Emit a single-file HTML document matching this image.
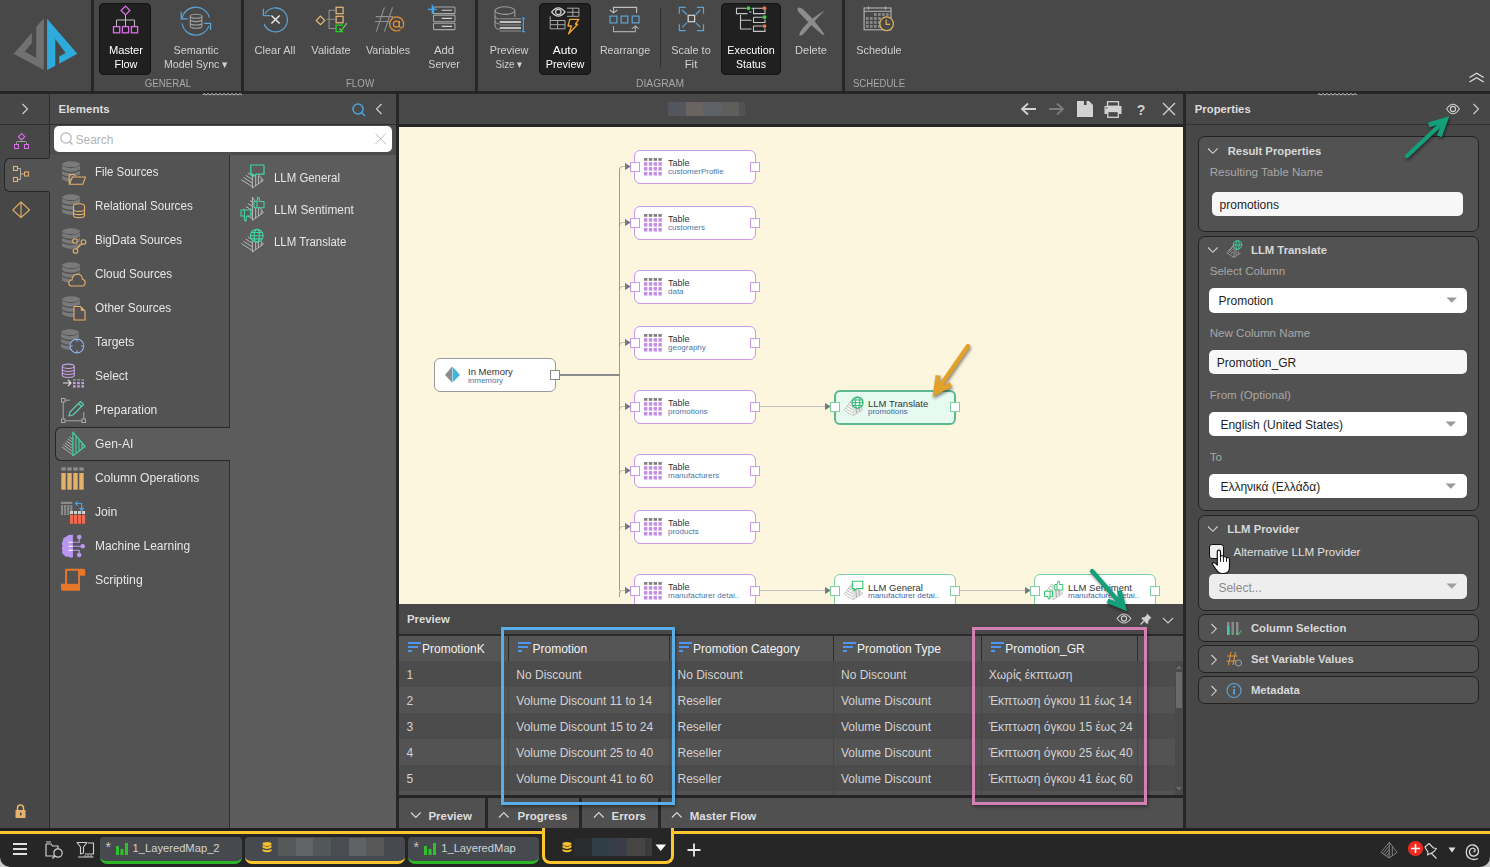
<!DOCTYPE html>
<html><head><meta charset="utf-8"><style>
html,body{margin:0;padding:0;width:1490px;height:867px;overflow:hidden;background:#262626;}
body{position:relative;font-family:"Liberation Sans",sans-serif;}
.t{position:absolute;line-height:1;white-space:nowrap;}
svg{overflow:visible}
</style></head><body>
<div style="position:absolute;left:0px;top:0px;width:1490px;height:91px;background:#484848;"></div>
<div style="position:absolute;left:0px;top:91px;width:1490px;height:3px;background:#262626;"></div>
<div style="position:absolute;left:91px;top:0px;width:3px;height:91px;background:#262626;"></div>
<div style="position:absolute;left:241px;top:0px;width:3px;height:91px;background:#262626;"></div>
<div style="position:absolute;left:475px;top:0px;width:3px;height:91px;background:#262626;"></div>
<div style="position:absolute;left:842px;top:0px;width:3px;height:91px;background:#262626;"></div>
<div style="position:absolute;left:0px;top:94px;width:49px;height:734px;background:#474747;"></div>
<div style="position:absolute;left:49px;top:94px;width:1px;height:734px;background:#2a2a2a;"></div>
<div style="position:absolute;left:0px;top:124px;width:49px;height:1px;background:#2e2e2e;"></div>
<div style="position:absolute;left:50px;top:94px;width:346px;height:30px;background:#4a4a4a;"></div>
<div style="position:absolute;left:50px;top:124px;width:346px;height:1px;background:#2e2e2e;"></div>
<div style="position:absolute;left:50px;top:125px;width:346px;height:30px;background:#4d4d4d;"></div>
<div style="position:absolute;left:50px;top:155px;width:179px;height:673px;background:#535353;"></div>
<div style="position:absolute;left:229px;top:155px;width:1px;height:673px;background:#2f2f2f;"></div>
<div style="position:absolute;left:230px;top:155px;width:166px;height:673px;background:#5c5c5c;"></div>
<div style="position:absolute;left:396px;top:94px;width:3px;height:734px;background:#262626;"></div>
<div style="position:absolute;left:399px;top:94px;width:784px;height:30px;background:#484848;"></div>
<div style="position:absolute;left:399px;top:124px;width:784px;height:3px;background:#262626;"></div>
<div style="position:absolute;left:399px;top:127px;width:784px;height:477px;background:#fdf6df;"></div>
<div style="position:absolute;left:1183px;top:94px;width:3px;height:734px;background:#262626;"></div>
<div style="position:absolute;left:1186px;top:94px;width:304px;height:734px;background:#474747;"></div>
<div style="position:absolute;left:1186px;top:124px;width:304px;height:1px;background:#333333;"></div>
<div style="position:absolute;left:0px;top:828px;width:1490px;height:39px;background:#262626;"></div>
<div style="position:absolute;left:0px;top:831px;width:1490px;height:3px;background:#fdc52e;"></div>
<svg style="position:absolute;left:0px;top:0px;" width="91" height="91" viewBox="0 0 91 91">
<polygon points="43.8,18.6 36.2,26.8 36.2,58.1 24.7,51.5 31.8,43.3 31.8,32.9 13.7,53.7 43.8,70.1" fill="#707173"/>
<polygon points="47.1,18.8 77.3,53.7 59.2,63.8 59.2,56.4 65.7,53.1 55.3,38.9 55.3,65.7 47.1,70.1" fill="#2eaadc"/>
</svg>
<div style="position:absolute;left:99px;top:3px;width:52px;height:72px;background:#202020;border-radius:5px;box-shadow:0 0 0 1px #151515 inset;"></div>
<div style="position:absolute;left:539px;top:3px;width:52px;height:72px;background:#202020;border-radius:5px;box-shadow:0 0 0 1px #151515 inset;"></div>
<div style="position:absolute;left:721px;top:3px;width:60px;height:72px;background:#202020;border-radius:5px;box-shadow:0 0 0 1px #151515 inset;"></div>
<div class="t" style="left:-174.5px;width:600px;text-align:center;top:45.29px;font-size:11px;color:#ffffff;font-weight:normal;transform:scaleX(1.0143);transform-origin:center top;">Master</div>
<div class="t" style="left:-174.5px;width:600px;text-align:center;top:59.29px;font-size:11px;color:#ffffff;font-weight:normal;transform:scaleX(0.9903);transform-origin:center top;">Flow</div>
<div class="t" style="left:-104.19999999999999px;width:600px;text-align:center;top:45.29px;font-size:11px;color:#d0d0d0;font-weight:normal;transform:scaleX(0.9835);transform-origin:center top;">Semantic</div>
<div class="t" style="left:-104.19999999999999px;width:600px;text-align:center;top:59.29px;font-size:11px;color:#d0d0d0;font-weight:normal;transform:scaleX(0.9640);transform-origin:center top;">Model Sync &#9662;</div>
<div class="t" style="left:-25px;width:600px;text-align:center;top:45.29px;font-size:11px;color:#d0d0d0;font-weight:normal;transform:scaleX(0.9985);transform-origin:center top;">Clear All</div>
<div class="t" style="left:31px;width:600px;text-align:center;top:45.29px;font-size:11px;color:#d0d0d0;font-weight:normal;transform:scaleX(1.0119);transform-origin:center top;">Validate</div>
<div class="t" style="left:87.69999999999999px;width:600px;text-align:center;top:45.29px;font-size:11px;color:#d0d0d0;font-weight:normal;transform:scaleX(0.9790);transform-origin:center top;">Variables</div>
<div class="t" style="left:144px;width:600px;text-align:center;top:45.29px;font-size:11px;color:#d0d0d0;font-weight:normal;transform:scaleX(1.0320);transform-origin:center top;">Add</div>
<div class="t" style="left:144px;width:600px;text-align:center;top:59.29px;font-size:11px;color:#d0d0d0;font-weight:normal;transform:scaleX(0.9722);transform-origin:center top;">Server</div>
<div class="t" style="left:209px;width:600px;text-align:center;top:45.29px;font-size:11px;color:#d0d0d0;font-weight:normal;transform:scaleX(0.9891);transform-origin:center top;">Preview</div>
<div class="t" style="left:209px;width:600px;text-align:center;top:59.29px;font-size:11px;color:#d0d0d0;font-weight:normal;transform:scaleX(0.8867);transform-origin:center top;">Size &#9662;</div>
<div class="t" style="left:265.1px;width:600px;text-align:center;top:45.29px;font-size:11px;color:#ffffff;font-weight:normal;transform:scaleX(1.0871);transform-origin:center top;">Auto</div>
<div class="t" style="left:265.1px;width:600px;text-align:center;top:59.29px;font-size:11px;color:#ffffff;font-weight:normal;transform:scaleX(0.9891);transform-origin:center top;">Preview</div>
<div class="t" style="left:324.5px;width:600px;text-align:center;top:45.29px;font-size:11px;color:#d0d0d0;font-weight:normal;transform:scaleX(0.9639);transform-origin:center top;">Rearrange</div>
<div class="t" style="left:391.1px;width:600px;text-align:center;top:45.29px;font-size:11px;color:#d0d0d0;font-weight:normal;transform:scaleX(0.9913);transform-origin:center top;">Scale to</div>
<div class="t" style="left:391.1px;width:600px;text-align:center;top:59.29px;font-size:11px;color:#d0d0d0;font-weight:normal;transform:scaleX(1.0393);transform-origin:center top;">Fit</div>
<div class="t" style="left:451.1px;width:600px;text-align:center;top:45.29px;font-size:11px;color:#ffffff;font-weight:normal;transform:scaleX(0.9791);transform-origin:center top;">Execution</div>
<div class="t" style="left:451.1px;width:600px;text-align:center;top:59.29px;font-size:11px;color:#ffffff;font-weight:normal;transform:scaleX(0.9556);transform-origin:center top;">Status</div>
<div class="t" style="left:511.20000000000005px;width:600px;text-align:center;top:45.29px;font-size:11px;color:#d0d0d0;font-weight:normal;transform:scaleX(1.0001);transform-origin:center top;">Delete</div>
<div class="t" style="left:579px;width:600px;text-align:center;top:45.29px;font-size:11px;color:#d0d0d0;font-weight:normal;transform:scaleX(0.9876);transform-origin:center top;">Schedule</div>
<div class="t" style="left:-132.3px;width:600px;text-align:center;top:78.19px;font-size:11px;color:#a8a8a8;font-weight:normal;transform:scaleX(0.8826);transform-origin:center top;">GENERAL</div>
<div class="t" style="left:59.60000000000002px;width:600px;text-align:center;top:78.19px;font-size:11px;color:#a8a8a8;font-weight:normal;transform:scaleX(0.8875);transform-origin:center top;">FLOW</div>
<div class="t" style="left:360.1px;width:600px;text-align:center;top:78.19px;font-size:11px;color:#a8a8a8;font-weight:normal;transform:scaleX(0.9369);transform-origin:center top;">DIAGRAM</div>
<div class="t" style="left:853px;top:78.19px;font-size:11px;color:#a8a8a8;font-weight:normal;transform:scaleX(0.8680);transform-origin:left top;">SCHEDULE</div>
<div style="position:absolute;left:660px;top:8px;width:1px;height:59px;background:#2e2e2e;"></div>
<svg style="position:absolute;left:1468px;top:71px;" width="18" height="14" viewBox="0 0 18 14"><path d="M1.5,6.5 L8.6,2.2 L15.8,6.5 M1.5,11 L8.6,6.7 L15.8,11" fill="none" stroke="#dcdcdc" stroke-width="1.3"/></svg>
<svg style="position:absolute;left:112px;top:5px;" width="30" height="32" viewBox="0 0 30 32">
<rect x="10.4" y="2.4" width="6.2" height="6.2" transform="rotate(45 13.5 5.5)" fill="none" stroke="#d96fe6" stroke-width="1.3"/>
<path d="M13.5,10 V15 M4.5,21 V15 H22.5 V21 M13.5,15 V21" fill="none" stroke="#bdbdbd" stroke-width="1"/>
<rect x="1.5" y="21.6" width="6.2" height="6.2" fill="none" stroke="#d96fe6" stroke-width="1.3"/>
<rect x="10.4" y="21.6" width="6.2" height="6.2" fill="none" stroke="#d96fe6" stroke-width="1.3"/>
<rect x="19.4" y="21.6" width="6.2" height="6.2" fill="none" stroke="#d96fe6" stroke-width="1.3"/>
</svg>
<svg style="position:absolute;left:179px;top:5px;" width="36" height="34" viewBox="0 0 36 34">
<path d="M3.0,13.7 A14,14 0 0 1 30.4,12.7" fill="none" stroke="#5ea3d4" stroke-width="1.2"/>
<path d="M2.2,6.8 V13.9 H8.8" fill="none" stroke="#5ea3d4" stroke-width="1.2"/>
<path d="M30.0,20.9 A14,14 0 0 1 3.0,18.5" fill="none" stroke="#5ea3d4" stroke-width="1.2"/>
<path d="M31.6,25 V18.3 H25.2" fill="none" stroke="#5ea3d4" stroke-width="1.2"/>
<ellipse cx="17.1" cy="11.2" rx="5.8" ry="2" fill="none" stroke="#a0a0a0" stroke-width="1.1"/>
<path d="M11.3,11.2 V21.3 A5.8,2 0 0 0 22.9,21.3 V11.2 M11.3,14.6 A5.8,2 0 0 0 22.9,14.6 M11.3,18 A5.8,2 0 0 0 22.9,18" fill="none" stroke="#a0a0a0" stroke-width="1.1"/>
</svg>
<svg style="position:absolute;left:261px;top:5px;" width="30" height="30" viewBox="0 0 30 30">
<path d="M3.12,19.0 A12,12 0 1 0 4.0,8.9" fill="none" stroke="#5ea3d4" stroke-width="1.2"/>
<path d="M2.4,3.8 V10.6 H9.2" fill="none" stroke="#5ea3d4" stroke-width="1.2"/>
<path d="M10.4,10.4 L18.6,18.6 M18.6,10.4 L10.4,18.6" stroke="#ececec" stroke-width="1.4"/>
</svg>
<svg style="position:absolute;left:315px;top:5px;" width="34" height="30" viewBox="0 0 34 30">
<rect x="2.5" y="12.4" width="6" height="6" transform="rotate(45 5.5 15.4)" fill="none" stroke="#e8b87a" stroke-width="1.2"/>
<path d="M20,5.2 H14.1 V23.5 H21 M14.1,14.3 H20 M11.5,14.3 H14.1" fill="none" stroke="#8f8f8f" stroke-width="1.1"/>
<rect x="21.1" y="2.3" width="7" height="6.4" fill="none" stroke="#e8b87a" stroke-width="1.2"/>
<rect x="21.1" y="11.3" width="7" height="6.5" fill="none" stroke="#e8b87a" stroke-width="1.2"/>
<path d="M28.1,20.2 H21.1 V26.7 H28.1" fill="none" stroke="#1ed41e" stroke-width="1.3"/>
<path d="M24.3,23.5 L26.4,25.6 L31.8,18.1" fill="none" stroke="#5fd35f" stroke-width="1.2"/>
</svg>
<svg style="position:absolute;left:373px;top:6px;" width="34" height="30" viewBox="0 0 34 30">
<path d="M11.4,1.3 L3.3,25.7 M19.5,1.3 L11.4,25.7 M2.8,10.6 H20 M2,15.5 H16.7" stroke="#8f8f8f" stroke-width="1.1"/>
<path d="M29.5,21.8 A7,7 0 1 0 27.5,23.8" fill="none" stroke="#e0913a" stroke-width="1.2"/>
<circle cx="23.4" cy="18.2" r="3" fill="none" stroke="#e0913a" stroke-width="1.2"/>
<path d="M26.4,15 V20 Q26.6,22.3 29.5,21.8" fill="none" stroke="#e0913a" stroke-width="1.2"/>
</svg>
<svg style="position:absolute;left:427px;top:4px;" width="34" height="30" viewBox="0 0 34 30">
<rect x="6.5" y="3" width="21.5" height="6.5" rx="0.8" fill="none" stroke="#a6a6a6" stroke-width="1.1"/>
<rect x="6.5" y="11.1" width="21.5" height="6.6" rx="0.8" fill="none" stroke="#a6a6a6" stroke-width="1.1"/>
<rect x="6.5" y="19.2" width="21.5" height="6.4" rx="0.8" fill="none" stroke="#a6a6a6" stroke-width="1.1"/>
<path d="M14.7,6.25 H25 M14.7,14.4 H25 M14.7,22.4 H25" stroke="#d0d0d0" stroke-width="1.2"/>
<path d="M5.3,0.8 V9.9 M0.9,5.4 H9.9" stroke="#3ba8ef" stroke-width="1.3"/>
</svg>
<svg style="position:absolute;left:493px;top:5px;" width="34" height="30" viewBox="0 0 34 30">
<ellipse cx="11.9" cy="5.6" rx="9.9" ry="3.8" fill="none" stroke="#9a9a9a" stroke-width="1.1"/>
<path d="M2,5.6 V21 Q2.5,23.8 6.5,24.5" fill="none" stroke="#9a9a9a" stroke-width="1.1"/>
<path d="M21.8,5.6 V12" fill="none" stroke="#9a9a9a" stroke-width="1.1"/>
<path d="M2,11 Q2.5,13.5 6.5,14 M2,16 Q2.5,18.5 6.5,19" fill="none" stroke="#9a9a9a" stroke-width="1.1"/>
<path d="M6.7,13.7 H27.9 M6.7,20 H27.9 M6.7,26 H27.9" stroke="#7a7a7a" stroke-width="1.4"/>
<path d="M6.7,17 H27.9 M6.7,23 H27.9" stroke="#c0c0c0" stroke-width="2"/>
<path d="M30.3,13.1 V26.6 M28.9,13.1 H31.8 M28.9,26.6 H31.8" stroke="#3ba8ef" stroke-width="1.2"/>
</svg>
<svg style="position:absolute;left:549px;top:5px;" width="32" height="30" viewBox="0 0 32 30">
<path d="M2.7,7 Q9.3,-1.2 16,7 Q9.3,15.2 2.7,7 Z" fill="none" stroke="#d0d0d0" stroke-width="1.2"/>
<circle cx="9.3" cy="7" r="2.7" fill="none" stroke="#d0d0d0" stroke-width="1.2"/>
<path d="M18,3.2 H29.9 V11.3 H18 M18,7.25 H29.9 M23.8,3.2 V11.3" fill="none" stroke="#a8a8a8" stroke-width="1"/>
<path d="M1.2,11.3 V23.8 H16 M1.2,15.5 H16 M1.2,19.7 H16 M8.6,15.5 V23.8 M16,15.5 V23.8" fill="none" stroke="#a8a8a8" stroke-width="1"/>
<path d="M20.8,14.3 H29.9 L26.3,19.2 H28.7 L19.6,28.8 L22.6,21 H19 Z" fill="none" stroke="#f2a52b" stroke-width="1.3" stroke-linejoin="round"/>
</svg>
<svg style="position:absolute;left:608px;top:5px;" width="34" height="30" viewBox="0 0 34 30">
<path d="M28.6,7.9 V2.4 H5.5 V7.9 M1.7,5 L5.5,7.9 L9.3,5" fill="none" stroke="#c0c0c0" stroke-width="1.1"/>
<rect x="2" y="11.1" width="6.9" height="6.8" fill="none" stroke="#5ea3d4" stroke-width="1.2"/>
<rect x="13.1" y="11.1" width="6.7" height="6.8" fill="none" stroke="#5ea3d4" stroke-width="1.2"/>
<rect x="24.2" y="11.1" width="6.8" height="6.8" fill="none" stroke="#5ea3d4" stroke-width="1.2"/>
<path d="M5.5,20.9 V26.6 H27.4 V20.9 M23.8,23.9 L27.4,20.9 L31,23.9" fill="none" stroke="#a8a8a8" stroke-width="1.1"/>
</svg>
<svg style="position:absolute;left:676px;top:5px;" width="30" height="30" viewBox="0 0 30 30">
<path d="M3.3,8.7 V2.4 H9.7 M21,2.4 H27.5 V8.7 M3.3,19.2 V25.6 H9.7 M21,25.6 H27.5 V19.2" fill="none" stroke="#5ea3d4" stroke-width="1.2"/>
<path d="M6.1,5 L10.8,9.5 M24.3,5 L19.8,9.5 M6.1,22.4 L10.8,17.9 M24.3,22 L19.8,17.9" stroke="#5ea3d4" stroke-width="1.1"/>
<rect x="12.2" y="10.3" width="6.4" height="6.4" fill="none" stroke="#d0d0d0" stroke-width="1.3"/>
</svg>
<svg style="position:absolute;left:735px;top:5px;" width="34" height="30" viewBox="0 0 34 30">
<path d="M11.5,3.2 H1.5 V8.6 H12.5 M16.5,3.2 H28 M18.5,3.2 V8.6 H30 V5 M18.5,12.2 V17.5 H30 V14.5 M18.5,12.2 H27.5 M18.5,21 V26.4 H30 V23.5 M18.5,21 H27.5 M14,7 H16.5 M5.5,10 V24 H16.5 M5.5,15.2 H16.5" fill="none" stroke="#c5c5c5" stroke-width="1.1"/>
<circle cx="13.5" cy="3.2" r="1.9" fill="#3dd34a"/>
<circle cx="29.5" cy="3.2" r="1.9" fill="#f0744d"/>
<circle cx="29.5" cy="12.2" r="1.9" fill="#3dd34a"/>
<circle cx="29.5" cy="21.1" r="1.9" fill="#f0744d"/>
</svg>
<svg style="position:absolute;left:796px;top:6px;" width="32" height="32" viewBox="0 0 32 32">
<path d="M1.8,2.2 Q3.5,0.2 7,3.2 Q18,13 28.6,28.4 Q27.5,29.5 25.5,28 Q13,18 3,6.5 Q0.5,3.8 1.8,2.2 Z" fill="#8c8c8c"/>
<path d="M28.6,4.5 Q20,13 11,24 Q6,30.5 3.5,29.5 Q2.5,28 6.5,22.5 Q15,12 28.6,4.5 Z" fill="#8c8c8c"/>
</svg>
<svg style="position:absolute;left:863px;top:6px;" width="34" height="30" viewBox="0 0 34 30">
<rect x="1.1" y="2" width="26.9" height="21.8" fill="none" stroke="#b5b5b5" stroke-width="1.1"/>
<path d="M1.1,5.3 H28 M5.5,0.5 V3.5 M22.4,0.5 V3.5" stroke="#b5b5b5" stroke-width="1.1"/>
<g fill="#8d8d8d"><rect x="11.0" y="7.2" width="2.6" height="2.6"/><rect x="15.1" y="7.2" width="2.6" height="2.6"/><rect x="19.1" y="7.2" width="2.6" height="2.6"/><rect x="23.1" y="7.2" width="2.6" height="2.6"/><rect x="3.0" y="11.2" width="2.6" height="2.6"/><rect x="7.0" y="11.2" width="2.6" height="2.6"/><rect x="11.0" y="11.2" width="2.6" height="2.6"/><rect x="15.1" y="11.2" width="2.6" height="2.6"/><rect x="3.0" y="15.2" width="2.6" height="2.6"/><rect x="7.0" y="15.2" width="2.6" height="2.6"/><rect x="11.0" y="15.2" width="2.6" height="2.6"/><rect x="15.1" y="15.2" width="2.6" height="2.6"/><rect x="3.0" y="19.1" width="2.6" height="2.6"/><rect x="7.0" y="19.1" width="2.6" height="2.6"/><rect x="11.0" y="19.1" width="2.6" height="2.6"/><rect x="15.1" y="19.1" width="2.6" height="2.6"/></g>
<circle cx="23.6" cy="17.75" r="6.8" fill="#484848" stroke="#e0b060" stroke-width="1.2"/>
<path d="M23.2,13.6 V18.4 H27" fill="none" stroke="#e0b060" stroke-width="1.2"/>
</svg>
<svg style="position:absolute;left:20px;top:103px;" width="10" height="12" viewBox="0 0 10 12"><path d="M2.5,1 L7.5,6 L2.5,11" fill="none" stroke="#d0d0d0" stroke-width="1.1"/></svg>
<svg style="position:absolute;left:12px;top:132px;" width="20" height="18" viewBox="0 0 20 18">
<rect x="7.35" y="2.45" width="4.5" height="4.5" transform="rotate(45 9.6 4.7)" fill="none" stroke="#d96fe6" stroke-width="1.1"/>
<path d="M4.5,12 V10.5 Q4.5,9.5 5.5,9.5 H13.5 Q14.5,9.5 14.5,10.5 V12" fill="none" stroke="#aaaaaa" stroke-width="0.9"/>
<rect x="2.5" y="12.5" width="4" height="4" fill="none" stroke="#d96fe6" stroke-width="1"/>
<rect x="12.5" y="12.5" width="4" height="4" fill="none" stroke="#d96fe6" stroke-width="1"/>
</svg>
<div style="position:absolute;left:4px;top:158px;width:46px;height:34px;background:#535353;border:1px solid #262626;border-right:none;border-radius:6px 0 0 6px;box-sizing:border-box;"></div>
<div style="position:absolute;left:49px;top:125px;width:1px;height:33px;background:#2a2a2a;"></div>
<div style="position:absolute;left:49px;top:192px;width:1px;height:636px;background:#2a2a2a;"></div>
<div style="position:absolute;left:49px;top:158px;width:1px;height:34px;background:#535353;"></div>
<svg style="position:absolute;left:12px;top:165px;" width="20" height="20" viewBox="0 0 20 20">
<rect x="1.5" y="1.5" width="4" height="4" fill="none" stroke="#e2b06e" stroke-width="1.1"/>
<rect x="1.5" y="12.5" width="4" height="4" fill="none" stroke="#e2b06e" stroke-width="1.1"/>
<rect x="12.5" y="7" width="4" height="4" fill="none" stroke="#e2b06e" stroke-width="1.1"/>
<path d="M6,3.5 H8.5 V14.5 H6 M8.5,9 H12" fill="none" stroke="#bbbbbb" stroke-width="0.9"/>
</svg>
<svg style="position:absolute;left:12px;top:201px;" width="20" height="18" viewBox="0 0 20 18">
<path d="M9,1 L17.5,9 L9,16.5 L0.8,9 Z M9,1 V16.5" fill="none" stroke="#d4a862" stroke-width="1.2" stroke-linejoin="round"/>
</svg>
<svg style="position:absolute;left:14px;top:804px;" width="14" height="16" viewBox="0 0 14 16">
<path d="M3.5,6 V4 A3,3 0 0 1 9.5,4 V6" fill="none" stroke="#e6b36d" stroke-width="1.5"/>
<rect x="1.5" y="6" width="10" height="8" fill="#e6b36d"/>
<rect x="6" y="8.5" width="1.5" height="3" fill="#474747"/>
</svg>
<div class="t" style="left:58.5px;top:104.27px;font-size:11.5px;color:#dddddd;font-weight:bold;">Elements</div>
<svg style="position:absolute;left:351px;top:102px;" width="16" height="16" viewBox="0 0 16 16"><circle cx="7" cy="7" r="5" fill="none" stroke="#4fa3e0" stroke-width="1.5"/><path d="M10.5,10.5 L14,14" stroke="#4fa3e0" stroke-width="1.6"/></svg>
<svg style="position:absolute;left:374px;top:103px;" width="10" height="12" viewBox="0 0 10 12"><path d="M7.5,1 L2.5,6 L7.5,11" fill="none" stroke="#d0d0d0" stroke-width="1.1"/></svg>
<div style="position:absolute;left:54px;top:126px;width:338px;height:26px;background:#ffffff;border-radius:5px;"></div>
<svg style="position:absolute;left:59px;top:131px;" width="16" height="16" viewBox="0 0 16 16"><circle cx="7" cy="7" r="5.2" fill="none" stroke="#b5b5b5" stroke-width="1.2"/><path d="M10.8,10.8 L13.5,13.5" stroke="#b5b5b5" stroke-width="1.3"/></svg>
<div class="t" style="left:75.5px;top:133.84px;font-size:12px;color:#b5b5b5;font-weight:normal;">Search</div>
<svg style="position:absolute;left:374px;top:132px;" width="14" height="14" viewBox="0 0 14 14"><path d="M1.5,1.5 L12,12 M12,1.5 L1.5,12" stroke="#c0c0c0" stroke-width="1"/></svg>
<div style="position:absolute;left:55px;top:427px;width:175px;height:34px;background:#5c5c5c;border:1px solid #262626;border-right:none;border-radius:6px 0 0 6px;box-sizing:border-box;"></div>
<div style="position:absolute;left:229px;top:428px;width:1px;height:32px;background:#5c5c5c;"></div>
<div class="t" style="left:95px;top:165.54px;font-size:12px;color:#e6e6e6;font-weight:normal;transform:scaleX(0.9506);transform-origin:left top;">File Sources</div>
<div class="t" style="left:95px;top:199.54px;font-size:12px;color:#e6e6e6;font-weight:normal;transform:scaleX(0.9700);transform-origin:left top;">Relational Sources</div>
<div class="t" style="left:95px;top:233.54px;font-size:12px;color:#e6e6e6;font-weight:normal;transform:scaleX(0.9672);transform-origin:left top;">BigData Sources</div>
<div class="t" style="left:95px;top:267.54px;font-size:12px;color:#e6e6e6;font-weight:normal;transform:scaleX(0.9808);transform-origin:left top;">Cloud Sources</div>
<div class="t" style="left:95px;top:301.54px;font-size:12px;color:#e6e6e6;font-weight:normal;transform:scaleX(0.9836);transform-origin:left top;">Other Sources</div>
<div class="t" style="left:95px;top:335.54px;font-size:12px;color:#e6e6e6;font-weight:normal;transform:scaleX(0.9987);transform-origin:left top;">Targets</div>
<div class="t" style="left:95px;top:369.54px;font-size:12px;color:#e6e6e6;font-weight:normal;transform:scaleX(0.9894);transform-origin:left top;">Select</div>
<div class="t" style="left:95px;top:403.54px;font-size:12px;color:#e6e6e6;font-weight:normal;transform:scaleX(1.0042);transform-origin:left top;">Preparation</div>
<div class="t" style="left:95px;top:437.54px;font-size:12px;color:#e6e6e6;font-weight:normal;transform:scaleX(1.0075);transform-origin:left top;">Gen-AI</div>
<div class="t" style="left:95px;top:471.54px;font-size:12px;color:#e6e6e6;font-weight:normal;transform:scaleX(1.0088);transform-origin:left top;">Column Operations</div>
<div class="t" style="left:95px;top:505.54px;font-size:12px;color:#e6e6e6;font-weight:normal;transform:scaleX(1.0084);transform-origin:left top;">Join</div>
<div class="t" style="left:95px;top:539.54px;font-size:12px;color:#e6e6e6;font-weight:normal;transform:scaleX(0.9969);transform-origin:left top;">Machine Learning</div>
<div class="t" style="left:95px;top:573.54px;font-size:12px;color:#e6e6e6;font-weight:normal;transform:scaleX(1.0216);transform-origin:left top;">Scripting</div>
<svg style="position:absolute;left:62px;top:160.5px;" width="26" height="26" viewBox="0 0 26 26"><g transform="translate(0,0)">
<ellipse cx="9.1" cy="3.2" rx="9" ry="2.9" fill="#7a7a7a"/>
<path d="M0.1,4.8 Q9.1,9.5 18.1,4.8 V8.4 Q9.1,13.1 0.1,8.4 Z" fill="#7a7a7a"/>
<path d="M0.1,9.9 Q9.1,14.6 18.1,9.9 V13.5 Q9.1,18.2 0.1,13.5 Z" fill="#7a7a7a"/>
<path d="M0.1,15 Q9.1,19.7 18.1,15 V18.6 Q9.1,23.3 0.1,18.6 Z" fill="#7a7a7a"/>
</g><path d="M7.2,13.5 V23.3 H20.8 L23.5,16 H10.5 L7.5,23 M7.2,13.5 H12 L13,15" fill="#535353" stroke="#e5b06a" stroke-width="1.1" stroke-linejoin="round"/></svg>
<svg style="position:absolute;left:62px;top:194px;" width="26" height="26" viewBox="0 0 26 26"><g transform="translate(0,0)">
<ellipse cx="9.1" cy="3.2" rx="9" ry="2.9" fill="#7a7a7a"/>
<path d="M0.1,4.8 Q9.1,9.5 18.1,4.8 V8.4 Q9.1,13.1 0.1,8.4 Z" fill="#7a7a7a"/>
<path d="M0.1,9.9 Q9.1,14.6 18.1,9.9 V13.5 Q9.1,18.2 0.1,13.5 Z" fill="#7a7a7a"/>
<path d="M0.1,15 Q9.1,19.7 18.1,15 V18.6 Q9.1,23.3 0.1,18.6 Z" fill="#7a7a7a"/>
</g><g fill="#535353" stroke="#e5b06a" stroke-width="1.1"><ellipse cx="17" cy="12" rx="5.5" ry="2.2"/><path d="M11.5,12 V21.5 A5.5,2.2 0 0 0 22.5,21.5 V12 M11.5,15.2 A5.5,2.2 0 0 0 22.5,15.2 M11.5,18.4 A5.5,2.2 0 0 0 22.5,18.4"/></g></svg>
<svg style="position:absolute;left:62px;top:228px;" width="26" height="26" viewBox="0 0 26 26"><g transform="translate(0,0)">
<ellipse cx="9.1" cy="3.2" rx="9" ry="2.9" fill="#7a7a7a"/>
<path d="M0.1,4.8 Q9.1,9.5 18.1,4.8 V8.4 Q9.1,13.1 0.1,8.4 Z" fill="#7a7a7a"/>
<path d="M0.1,9.9 Q9.1,14.6 18.1,9.9 V13.5 Q9.1,18.2 0.1,13.5 Z" fill="#7a7a7a"/>
<path d="M0.1,15 Q9.1,19.7 18.1,15 V18.6 Q9.1,23.3 0.1,18.6 Z" fill="#7a7a7a"/>
</g><g fill="#535353" stroke="#e5b06a" stroke-width="1.1"><circle cx="21.5" cy="14" r="2.3"/><circle cx="13" cy="13" r="2.3"/><circle cx="13.5" cy="23" r="2.3"/><path d="M14.5,21 L20,15.5"/></g></svg>
<svg style="position:absolute;left:62px;top:262px;" width="26" height="26" viewBox="0 0 26 26"><g transform="translate(0,0)">
<ellipse cx="9.1" cy="3.2" rx="9" ry="2.9" fill="#7a7a7a"/>
<path d="M0.1,4.8 Q9.1,9.5 18.1,4.8 V8.4 Q9.1,13.1 0.1,8.4 Z" fill="#7a7a7a"/>
<path d="M0.1,9.9 Q9.1,14.6 18.1,9.9 V13.5 Q9.1,18.2 0.1,13.5 Z" fill="#7a7a7a"/>
<path d="M0.1,15 Q9.1,19.7 18.1,15 V18.6 Q9.1,23.3 0.1,18.6 Z" fill="#7a7a7a"/>
</g><path d="M9.5,24 Q6.8,24 6.8,21 Q7,18 10,18 Q10.5,12.5 15.5,12.3 Q20.3,12.5 20.5,17.2 Q23.2,17.7 23.2,20.7 Q23,24 20,24 Z" fill="#535353" stroke="#e5b06a" stroke-width="1.1"/></svg>
<svg style="position:absolute;left:62px;top:296px;" width="26" height="26" viewBox="0 0 26 26"><g transform="translate(0,0)">
<ellipse cx="9.1" cy="3.2" rx="9" ry="2.9" fill="#7a7a7a"/>
<path d="M0.1,4.8 Q9.1,9.5 18.1,4.8 V8.4 Q9.1,13.1 0.1,8.4 Z" fill="#7a7a7a"/>
<path d="M0.1,9.9 Q9.1,14.6 18.1,9.9 V13.5 Q9.1,18.2 0.1,13.5 Z" fill="#7a7a7a"/>
<path d="M0.1,15 Q9.1,19.7 18.1,15 V18.6 Q9.1,23.3 0.1,18.6 Z" fill="#7a7a7a"/>
</g><path d="M12,10.5 H18.5 L23,15 V24 H12 Z" fill="#535353" stroke="#e5b06a" stroke-width="1.1"/><path d="M18.8,10.8 L22.7,14.7 H18.8 Z" fill="#e5b06a"/></svg>
<svg style="position:absolute;left:61px;top:329px;" width="28" height="28" viewBox="0 0 28 28"><g transform="translate(0,0)">
<ellipse cx="9.1" cy="3.2" rx="9" ry="2.9" fill="#7a7a7a"/>
<path d="M0.1,4.8 Q9.1,9.5 18.1,4.8 V8.4 Q9.1,13.1 0.1,8.4 Z" fill="#7a7a7a"/>
<path d="M0.1,9.9 Q9.1,14.6 18.1,9.9 V13.5 Q9.1,18.2 0.1,13.5 Z" fill="#7a7a7a"/>
<path d="M0.1,15 Q9.1,19.7 18.1,15 V18.6 Q9.1,23.3 0.1,18.6 Z" fill="#7a7a7a"/>
</g><g fill="#535353" stroke="#8fb3ea" stroke-width="1.1"><circle cx="15.9" cy="17" r="6.9"/></g><path d="M15.9,10 V12.8 M15.9,21.2 V24 M9,17 H11.8 M20,17 H22.8" stroke="#8fb3ea" stroke-width="1.1"/></svg>
<svg style="position:absolute;left:61px;top:363px;" width="26" height="26" viewBox="0 0 26 26"><g fill="none" stroke="#c7a3e0" stroke-width="1.1"><ellipse cx="7.3" cy="3.3" rx="6" ry="2.2"/><path d="M1.3,3.3 V12.3 A6,2.2 0 0 0 13.3,12.3 V3.3 M1.3,6.3 A6,2.2 0 0 0 13.3,6.3 M1.3,9.3 A6,2.2 0 0 0 13.3,9.3"/></g>
<path d="M2,20 H10 M7,17 L10,20 L7,23" fill="none" stroke="#e0e0e0" stroke-width="1.1"/>
<g fill="#8d8d8d"><rect x="12" y="16" width="2.6" height="1.8"/><rect x="16.2" y="16" width="2.6" height="1.8"/><rect x="20.4" y="16" width="2.6" height="1.8"/></g>
<g fill="#c7a3e0"><rect x="12" y="19" width="2.6" height="2.2"/><rect x="16.2" y="19" width="2.6" height="2.2"/><rect x="20.4" y="19" width="2.6" height="2.2"/><rect x="12" y="22.3" width="2.6" height="2.2"/><rect x="16.2" y="22.3" width="2.6" height="2.2"/><rect x="20.4" y="22.3" width="2.6" height="2.2"/></g></svg>
<svg style="position:absolute;left:60px;top:397px;" width="28" height="28" viewBox="0 0 28 28"><g fill="none" stroke="#a9a9a9" stroke-width="1"><rect x="1.5" y="1.5" width="3.5" height="3.5"/><rect x="22" y="22" width="3.5" height="3.5"/><rect x="1.5" y="22" width="3.5" height="3.5"/><path d="M5,3.2 H10 M3.2,5 V22 M5,23.8 H22 M23.8,15 V22"/></g>
<path d="M9,19 L10,15 L20.5,4.5 L23.5,7.5 L13,18 Z M18.5,6.5 L21.5,9.5" fill="none" stroke="#5ad0b4" stroke-width="1.2" stroke-linejoin="round"/></svg>
<svg style="position:absolute;left:61px;top:431px;" width="26" height="27" viewBox="0 0 26 27"><g stroke="#c8c8c8" stroke-width="0.8" fill="none"><path d="M8.39,5.82 L11.40,8.25"/><path d="M6.87,7.82 L11.40,11.30"/><path d="M5.35,9.82 L11.40,14.36"/><path d="M3.83,11.83 L11.40,17.41"/><path d="M2.31,13.83 L11.40,20.47"/><path d="M0.79,15.83 L11.40,23.52"/></g><path d="M11.9,1.2 L24,15.5 L11.9,24.7 Z" fill="none" stroke="#3fd7a5" stroke-width="1.2" stroke-linejoin="round"/><path d="M14.93,5.58 V21.60" stroke="#3fd7a5" stroke-width="1.1"/><path d="M17.95,9.15 V19.30" stroke="#3fd7a5" stroke-width="1.1"/><path d="M20.98,12.73 V17.00" stroke="#3fd7a5" stroke-width="1.1"/></svg>
<svg style="position:absolute;left:61px;top:467px;" width="24" height="24" viewBox="0 0 24 24"><g fill="#8d8d8d"><rect x="0.3" y="0.3" width="4.4" height="3.3"/><rect x="6.3" y="0.3" width="4.4" height="3.3"/><rect x="12.3" y="0.3" width="4.4" height="3.3"/><rect x="18.3" y="0.3" width="4.4" height="3.3"/></g>
<g fill="#e5b06a"><rect x="0.3" y="6" width="4.4" height="16.7"/><rect x="6.3" y="6" width="4.4" height="16.7"/><rect x="12.3" y="6" width="4.4" height="16.7"/><rect x="18.3" y="6" width="4.4" height="16.7"/></g></svg>
<svg style="position:absolute;left:61px;top:500px;" width="26" height="26" viewBox="0 0 26 26"><g fill="#8a8a8a"><rect x="0" y="1.8" width="11.3" height="2.2"/><rect x="0" y="5" width="2.1" height="10.2"/><rect x="3.1" y="5" width="2.1" height="10.2"/><rect x="6.2" y="5" width="2.1" height="10.2"/><rect x="9.3" y="5" width="2.1" height="6"/></g>
<g fill="#d0d0d0"><rect x="9" y="11" width="3.1" height="3"/><rect x="13" y="11" width="3.1" height="3"/><rect x="17" y="11" width="3.1" height="3"/><rect x="21" y="11" width="3.1" height="3"/></g>
<g fill="#ef6a4e"><rect x="9" y="14.8" width="3.1" height="9"/><rect x="13" y="14.8" width="3.1" height="9"/><rect x="17" y="14.8" width="3.1" height="9"/><rect x="21" y="14.8" width="3.1" height="9"/></g>
<path d="M14.6,3.5 H20.6 V10 M18.6,8 L20.6,10.3 L22.6,8 M16.7,1.4 L14.5,3.5 L16.7,5.6" fill="none" stroke="#4aa3df" stroke-width="1.2"/></svg>
<svg style="position:absolute;left:61px;top:534px;" width="26" height="26" viewBox="0 0 26 26"><path d="M11.9,0.8 V23.2 Q9,24 7,22.6 Q4,23.5 2.8,20.8 Q0.3,19.5 1.4,16.5 Q-0.2,14 1.5,12 Q0,9 2,7 Q1.5,3.5 4.8,3 Q7,0 11.9,0.8 Z" fill="#b996f2"/>
<g stroke="#b996f2" stroke-width="1.1" fill="none"><path d="M11.9,8.3 H18.2 V3 M11.9,12.3 H21.7 M11.9,16.3 H18.2 V21"/></g>
<g fill="#b996f2"><circle cx="18.2" cy="3" r="2.3"/><circle cx="21.7" cy="12.3" r="2.3"/><circle cx="18.2" cy="21" r="2.3"/></g>
<g stroke="#ffffff" stroke-width="1.1"><path d="M7.5,8.3 H11.9 M7.5,12.3 H11.9 M7.5,16.3 H11.9"/></g></svg>
<svg style="position:absolute;left:61px;top:568px;" width="26" height="26" viewBox="0 0 26 26"><path d="M5,0.8 H22.2 Q24.2,0.8 24.2,2.8 V7.7 H19 V22.7 H2 Q0,22.7 0,20.7 V15.8 H4.1 V1.7 Q4.1,0.8 5,0.8 Z" fill="#e5782b"/>
<rect x="6.1" y="2.8" width="11" height="13" fill="#535353"/></svg>
<div class="t" style="left:274.4px;top:172.24px;font-size:12px;color:#e6e6e6;font-weight:normal;transform:scaleX(0.9514);transform-origin:left top;">LLM General</div>
<div class="t" style="left:274.4px;top:204.24px;font-size:12px;color:#e6e6e6;font-weight:normal;transform:scaleX(0.9887);transform-origin:left top;">LLM Sentiment</div>
<div class="t" style="left:274.4px;top:236.04px;font-size:12px;color:#e6e6e6;font-weight:normal;transform:scaleX(0.9508);transform-origin:left top;">LLM Translate</div>
<svg style="position:absolute;left:239px;top:163px;" width="26" height="26" viewBox="0 0 26 26"><g stroke="#cfcfcf" stroke-width="0.8" fill="none"><path d="M13.4,5.2 V25 M13.4,25 L24.4,17.3 L13.4,5.2"/><path d="M11.00,7.72 L13.20,9.16"/><path d="M8.84,9.99 L13.20,12.72"/><path d="M6.68,12.26 L13.20,16.29"/><path d="M4.52,14.52 L13.20,19.85"/><path d="M2.36,16.79 L13.20,23.42"/><path d="M16.70,9.83 V22.69"/><path d="M19.45,12.86 V20.77"/><path d="M22.20,15.88 V18.84"/></g><path d="M11.8,2 H25 V11.2 H17 L14,13.5 L14.3,11.2 H11.8 Z" fill="#5c5c5c" stroke="#3fd7a5" stroke-width="1.2" stroke-linejoin="round"/></svg>
<svg style="position:absolute;left:239px;top:195px;" width="26" height="28" viewBox="0 0 26 28"><g stroke="#cfcfcf" stroke-width="0.8" fill="none"><path d="M13.4,2.3 V25.3 M13.4,25.3 L24.4,17.6 L13.4,2.3"/><path d="M11.00,5.58 L13.20,6.90"/><path d="M8.84,8.53 L13.20,11.04"/><path d="M6.68,11.48 L13.20,15.18"/><path d="M4.52,14.44 L13.20,19.32"/><path d="M2.36,17.39 L13.20,23.46"/><path d="M16.70,7.89 V22.99"/><path d="M19.45,11.71 V21.07"/><path d="M22.20,15.54 V19.14"/></g><path d="M15,6.5 H18 L18.8,2.3 Q20.5,2.3 20.3,4.5 V6.5 H25 V12.7 H15 Z M18,6.5 V12.7" fill="#5c5c5c" stroke="#3fd7a5" stroke-width="1.1" stroke-linejoin="round"/><path d="M2,15 H11.8 V21 H7.5 L7,26 Q5.2,26 5.4,23.5 V21 H2 Z M5.4,15 V21" fill="#5c5c5c" stroke="#3fd7a5" stroke-width="1.1" stroke-linejoin="round"/></svg>
<svg style="position:absolute;left:239px;top:227px;" width="26" height="26" viewBox="0 0 26 26"><g stroke="#cfcfcf" stroke-width="0.8" fill="none"><path d="M13.4,5 V25 M13.4,25 L24.4,17 L13.4,5"/><path d="M11.00,7.50 L13.20,9.00"/><path d="M8.84,9.75 L13.20,12.60"/><path d="M6.68,12.00 L13.20,16.20"/><path d="M4.52,14.25 L13.20,19.80"/><path d="M2.36,16.50 L13.20,23.40"/><path d="M16.70,9.60 V22.60"/><path d="M19.45,12.60 V20.60"/><path d="M22.20,15.60 V18.60"/></g><g fill="#5c5c5c" stroke="#3fd7a5" stroke-width="1.1"><circle cx="17.8" cy="8.7" r="6.3"/></g><g fill="none" stroke="#3fd7a5" stroke-width="1.1"><ellipse cx="17.8" cy="8.7" rx="2.6" ry="6.3"/><path d="M11.5,8.7 H24.1 M12.5,5.5 H23 M12.5,11.9 H23"/></g></svg>
<div style="position:absolute;left:668px;top:102px;width:18px;height:14px;background:#53565c;"></div>
<div style="position:absolute;left:686px;top:102px;width:17px;height:14px;background:#6b6361;"></div>
<div style="position:absolute;left:703px;top:102px;width:18px;height:14px;background:#5f6266;"></div>
<div style="position:absolute;left:721px;top:102px;width:18px;height:14px;background:#605e5b;"></div>
<div style="position:absolute;left:739px;top:102px;width:6px;height:14px;background:#525252;"></div>
<svg style="position:absolute;left:1020px;top:102px;" width="18" height="14" viewBox="0 0 18 14"><path d="M16,7 H2.5 M8,1.5 L2,7 L8,12.5" fill="none" stroke="#d2d2d2" stroke-width="1.8"/></svg>
<svg style="position:absolute;left:1048px;top:102px;" width="18" height="14" viewBox="0 0 18 14"><path d="M1,7 H14.5 M9,1.5 L15,7 L9,12.5" fill="none" stroke="#7c7c7c" stroke-width="1.8"/></svg>
<svg style="position:absolute;left:1077px;top:100px;" width="17" height="18" viewBox="0 0 17 18"><path d="M0,1 H12 L16,5 V17 H0 Z" fill="#d2d2d2"/><rect x="7" y="1" width="2.5" height="4" fill="#484848"/></svg>
<svg style="position:absolute;left:1104px;top:101px;" width="18" height="17" viewBox="0 0 18 17"><rect x="3.5" y="0.7" width="11" height="4.5" fill="none" stroke="#d2d2d2" stroke-width="1.3"/><path d="M0.5,5 H17.5 V13 H14.5 V10.5 H3.5 V13 H0.5 Z" fill="#d2d2d2"/><rect x="3.8" y="10.5" width="10.5" height="5.8" fill="none" stroke="#d2d2d2" stroke-width="1.3"/><rect x="1.5" y="6.5" width="2" height="1" fill="#484848"/></svg>
<div class="t" style="left:841px;width:600px;text-align:center;top:102.95px;font-size:14px;color:#d2d2d2;font-weight:bold;">?</div>
<svg style="position:absolute;left:1162px;top:102px;" width="14" height="14" viewBox="0 0 14 14"><path d="M1,1 L13,13 M13,1 L1,13" stroke="#d2d2d2" stroke-width="1.3"/></svg>
<div style="position:absolute;left:619px;top:170px;width:1px;height:421px;background:#9c9c9c;"></div>
<div style="position:absolute;left:559px;top:374px;width:61px;height:2px;background:#8c8c8c;"></div>
<div style="position:absolute;left:634px;top:150px;width:122px;height:34px;background:#ffffff;border:1px solid #c79be6;border-radius:6px;box-sizing:border-box;"></div>
<div style="position:absolute;left:630px;top:162px;width:10px;height:10px;background:#ffffff;border:1px solid #c79be6;box-sizing:border-box;"></div>
<div style="position:absolute;left:750px;top:162px;width:10px;height:10px;background:#ffffff;border:1px solid #c79be6;box-sizing:border-box;"></div>
<div style="position:absolute;left:619px;top:166px;width:7px;height:6px;border-left:1px solid #9c9c9c;border-top:1px solid #c0c0c0;border-top-left-radius:4px;"></div>
<svg style="position:absolute;left:625px;top:163.0px;" width="6" height="7" viewBox="0 0 6 7"><path d="M0,0 L6,3.5 L0,7 Z" fill="#7a7a7a"/></svg>
<svg style="position:absolute;left:644px;top:158px;" width="18" height="19" viewBox="0 0 18 19"><g fill="#808080"><rect x="0" y="0" width="3.4" height="2.8"/><rect x="4.8" y="0" width="3.4" height="2.8"/><rect x="9.6" y="0" width="3.4" height="2.8"/><rect x="14.4" y="0" width="3.4" height="2.8"/></g><g fill="#c08de3"><rect x="0.0" y="4.2" width="3.4" height="3.5"/><rect x="4.8" y="4.2" width="3.4" height="3.5"/><rect x="9.6" y="4.2" width="3.4" height="3.5"/><rect x="14.399999999999999" y="4.2" width="3.4" height="3.5"/><rect x="0.0" y="9.100000000000001" width="3.4" height="3.5"/><rect x="4.8" y="9.100000000000001" width="3.4" height="3.5"/><rect x="9.6" y="9.100000000000001" width="3.4" height="3.5"/><rect x="14.399999999999999" y="9.100000000000001" width="3.4" height="3.5"/><rect x="0.0" y="14.0" width="3.4" height="3.5"/><rect x="4.8" y="14.0" width="3.4" height="3.5"/><rect x="9.6" y="14.0" width="3.4" height="3.5"/><rect x="14.399999999999999" y="14.0" width="3.4" height="3.5"/></g></svg>
<div class="t" style="left:668px;top:159.18px;font-size:9px;color:#333333;font-weight:normal;">Table</div>
<div class="t" style="left:668px;top:168.23px;font-size:8px;color:#4a78a8;font-weight:normal;">customerProfile</div>
<div style="position:absolute;left:634px;top:206px;width:122px;height:34px;background:#ffffff;border:1px solid #c79be6;border-radius:6px;box-sizing:border-box;"></div>
<div style="position:absolute;left:630px;top:218px;width:10px;height:10px;background:#ffffff;border:1px solid #c79be6;box-sizing:border-box;"></div>
<div style="position:absolute;left:750px;top:218px;width:10px;height:10px;background:#ffffff;border:1px solid #c79be6;box-sizing:border-box;"></div>
<div style="position:absolute;left:619px;top:222px;width:7px;height:6px;border-left:1px solid #9c9c9c;border-top:1px solid #c0c0c0;border-top-left-radius:4px;"></div>
<svg style="position:absolute;left:625px;top:219.0px;" width="6" height="7" viewBox="0 0 6 7"><path d="M0,0 L6,3.5 L0,7 Z" fill="#7a7a7a"/></svg>
<svg style="position:absolute;left:644px;top:214px;" width="18" height="19" viewBox="0 0 18 19"><g fill="#808080"><rect x="0" y="0" width="3.4" height="2.8"/><rect x="4.8" y="0" width="3.4" height="2.8"/><rect x="9.6" y="0" width="3.4" height="2.8"/><rect x="14.4" y="0" width="3.4" height="2.8"/></g><g fill="#c08de3"><rect x="0.0" y="4.2" width="3.4" height="3.5"/><rect x="4.8" y="4.2" width="3.4" height="3.5"/><rect x="9.6" y="4.2" width="3.4" height="3.5"/><rect x="14.399999999999999" y="4.2" width="3.4" height="3.5"/><rect x="0.0" y="9.100000000000001" width="3.4" height="3.5"/><rect x="4.8" y="9.100000000000001" width="3.4" height="3.5"/><rect x="9.6" y="9.100000000000001" width="3.4" height="3.5"/><rect x="14.399999999999999" y="9.100000000000001" width="3.4" height="3.5"/><rect x="0.0" y="14.0" width="3.4" height="3.5"/><rect x="4.8" y="14.0" width="3.4" height="3.5"/><rect x="9.6" y="14.0" width="3.4" height="3.5"/><rect x="14.399999999999999" y="14.0" width="3.4" height="3.5"/></g></svg>
<div class="t" style="left:668px;top:215.18px;font-size:9px;color:#333333;font-weight:normal;">Table</div>
<div class="t" style="left:668px;top:224.23px;font-size:8px;color:#4a78a8;font-weight:normal;">customers</div>
<div style="position:absolute;left:634px;top:270px;width:122px;height:34px;background:#ffffff;border:1px solid #c79be6;border-radius:6px;box-sizing:border-box;"></div>
<div style="position:absolute;left:630px;top:282px;width:10px;height:10px;background:#ffffff;border:1px solid #c79be6;box-sizing:border-box;"></div>
<div style="position:absolute;left:750px;top:282px;width:10px;height:10px;background:#ffffff;border:1px solid #c79be6;box-sizing:border-box;"></div>
<div style="position:absolute;left:619px;top:286px;width:7px;height:6px;border-left:1px solid #9c9c9c;border-top:1px solid #c0c0c0;border-top-left-radius:4px;"></div>
<svg style="position:absolute;left:625px;top:283.0px;" width="6" height="7" viewBox="0 0 6 7"><path d="M0,0 L6,3.5 L0,7 Z" fill="#7a7a7a"/></svg>
<svg style="position:absolute;left:644px;top:278px;" width="18" height="19" viewBox="0 0 18 19"><g fill="#808080"><rect x="0" y="0" width="3.4" height="2.8"/><rect x="4.8" y="0" width="3.4" height="2.8"/><rect x="9.6" y="0" width="3.4" height="2.8"/><rect x="14.4" y="0" width="3.4" height="2.8"/></g><g fill="#c08de3"><rect x="0.0" y="4.2" width="3.4" height="3.5"/><rect x="4.8" y="4.2" width="3.4" height="3.5"/><rect x="9.6" y="4.2" width="3.4" height="3.5"/><rect x="14.399999999999999" y="4.2" width="3.4" height="3.5"/><rect x="0.0" y="9.100000000000001" width="3.4" height="3.5"/><rect x="4.8" y="9.100000000000001" width="3.4" height="3.5"/><rect x="9.6" y="9.100000000000001" width="3.4" height="3.5"/><rect x="14.399999999999999" y="9.100000000000001" width="3.4" height="3.5"/><rect x="0.0" y="14.0" width="3.4" height="3.5"/><rect x="4.8" y="14.0" width="3.4" height="3.5"/><rect x="9.6" y="14.0" width="3.4" height="3.5"/><rect x="14.399999999999999" y="14.0" width="3.4" height="3.5"/></g></svg>
<div class="t" style="left:668px;top:279.18px;font-size:9px;color:#333333;font-weight:normal;">Table</div>
<div class="t" style="left:668px;top:288.23px;font-size:8px;color:#4a78a8;font-weight:normal;">data</div>
<div style="position:absolute;left:634px;top:326px;width:122px;height:34px;background:#ffffff;border:1px solid #c79be6;border-radius:6px;box-sizing:border-box;"></div>
<div style="position:absolute;left:630px;top:338px;width:10px;height:10px;background:#ffffff;border:1px solid #c79be6;box-sizing:border-box;"></div>
<div style="position:absolute;left:750px;top:338px;width:10px;height:10px;background:#ffffff;border:1px solid #c79be6;box-sizing:border-box;"></div>
<div style="position:absolute;left:619px;top:342px;width:7px;height:6px;border-left:1px solid #9c9c9c;border-top:1px solid #c0c0c0;border-top-left-radius:4px;"></div>
<svg style="position:absolute;left:625px;top:339.0px;" width="6" height="7" viewBox="0 0 6 7"><path d="M0,0 L6,3.5 L0,7 Z" fill="#7a7a7a"/></svg>
<svg style="position:absolute;left:644px;top:334px;" width="18" height="19" viewBox="0 0 18 19"><g fill="#808080"><rect x="0" y="0" width="3.4" height="2.8"/><rect x="4.8" y="0" width="3.4" height="2.8"/><rect x="9.6" y="0" width="3.4" height="2.8"/><rect x="14.4" y="0" width="3.4" height="2.8"/></g><g fill="#c08de3"><rect x="0.0" y="4.2" width="3.4" height="3.5"/><rect x="4.8" y="4.2" width="3.4" height="3.5"/><rect x="9.6" y="4.2" width="3.4" height="3.5"/><rect x="14.399999999999999" y="4.2" width="3.4" height="3.5"/><rect x="0.0" y="9.100000000000001" width="3.4" height="3.5"/><rect x="4.8" y="9.100000000000001" width="3.4" height="3.5"/><rect x="9.6" y="9.100000000000001" width="3.4" height="3.5"/><rect x="14.399999999999999" y="9.100000000000001" width="3.4" height="3.5"/><rect x="0.0" y="14.0" width="3.4" height="3.5"/><rect x="4.8" y="14.0" width="3.4" height="3.5"/><rect x="9.6" y="14.0" width="3.4" height="3.5"/><rect x="14.399999999999999" y="14.0" width="3.4" height="3.5"/></g></svg>
<div class="t" style="left:668px;top:335.18px;font-size:9px;color:#333333;font-weight:normal;">Table</div>
<div class="t" style="left:668px;top:344.23px;font-size:8px;color:#4a78a8;font-weight:normal;">geography</div>
<div style="position:absolute;left:634px;top:390px;width:122px;height:34px;background:#ffffff;border:1px solid #c79be6;border-radius:6px;box-sizing:border-box;"></div>
<div style="position:absolute;left:630px;top:402px;width:10px;height:10px;background:#ffffff;border:1px solid #c79be6;box-sizing:border-box;"></div>
<div style="position:absolute;left:750px;top:402px;width:10px;height:10px;background:#ffffff;border:1px solid #c79be6;box-sizing:border-box;"></div>
<div style="position:absolute;left:619px;top:406px;width:7px;height:6px;border-left:1px solid #9c9c9c;border-top:1px solid #c0c0c0;border-top-left-radius:4px;"></div>
<svg style="position:absolute;left:625px;top:403.0px;" width="6" height="7" viewBox="0 0 6 7"><path d="M0,0 L6,3.5 L0,7 Z" fill="#7a7a7a"/></svg>
<svg style="position:absolute;left:644px;top:398px;" width="18" height="19" viewBox="0 0 18 19"><g fill="#808080"><rect x="0" y="0" width="3.4" height="2.8"/><rect x="4.8" y="0" width="3.4" height="2.8"/><rect x="9.6" y="0" width="3.4" height="2.8"/><rect x="14.4" y="0" width="3.4" height="2.8"/></g><g fill="#c08de3"><rect x="0.0" y="4.2" width="3.4" height="3.5"/><rect x="4.8" y="4.2" width="3.4" height="3.5"/><rect x="9.6" y="4.2" width="3.4" height="3.5"/><rect x="14.399999999999999" y="4.2" width="3.4" height="3.5"/><rect x="0.0" y="9.100000000000001" width="3.4" height="3.5"/><rect x="4.8" y="9.100000000000001" width="3.4" height="3.5"/><rect x="9.6" y="9.100000000000001" width="3.4" height="3.5"/><rect x="14.399999999999999" y="9.100000000000001" width="3.4" height="3.5"/><rect x="0.0" y="14.0" width="3.4" height="3.5"/><rect x="4.8" y="14.0" width="3.4" height="3.5"/><rect x="9.6" y="14.0" width="3.4" height="3.5"/><rect x="14.399999999999999" y="14.0" width="3.4" height="3.5"/></g></svg>
<div class="t" style="left:668px;top:399.18px;font-size:9px;color:#333333;font-weight:normal;">Table</div>
<div class="t" style="left:668px;top:408.23px;font-size:8px;color:#4a78a8;font-weight:normal;">promotions</div>
<div style="position:absolute;left:634px;top:454px;width:122px;height:34px;background:#ffffff;border:1px solid #c79be6;border-radius:6px;box-sizing:border-box;"></div>
<div style="position:absolute;left:630px;top:466px;width:10px;height:10px;background:#ffffff;border:1px solid #c79be6;box-sizing:border-box;"></div>
<div style="position:absolute;left:750px;top:466px;width:10px;height:10px;background:#ffffff;border:1px solid #c79be6;box-sizing:border-box;"></div>
<div style="position:absolute;left:619px;top:470px;width:7px;height:6px;border-left:1px solid #9c9c9c;border-top:1px solid #c0c0c0;border-top-left-radius:4px;"></div>
<svg style="position:absolute;left:625px;top:467.0px;" width="6" height="7" viewBox="0 0 6 7"><path d="M0,0 L6,3.5 L0,7 Z" fill="#7a7a7a"/></svg>
<svg style="position:absolute;left:644px;top:462px;" width="18" height="19" viewBox="0 0 18 19"><g fill="#808080"><rect x="0" y="0" width="3.4" height="2.8"/><rect x="4.8" y="0" width="3.4" height="2.8"/><rect x="9.6" y="0" width="3.4" height="2.8"/><rect x="14.4" y="0" width="3.4" height="2.8"/></g><g fill="#c08de3"><rect x="0.0" y="4.2" width="3.4" height="3.5"/><rect x="4.8" y="4.2" width="3.4" height="3.5"/><rect x="9.6" y="4.2" width="3.4" height="3.5"/><rect x="14.399999999999999" y="4.2" width="3.4" height="3.5"/><rect x="0.0" y="9.100000000000001" width="3.4" height="3.5"/><rect x="4.8" y="9.100000000000001" width="3.4" height="3.5"/><rect x="9.6" y="9.100000000000001" width="3.4" height="3.5"/><rect x="14.399999999999999" y="9.100000000000001" width="3.4" height="3.5"/><rect x="0.0" y="14.0" width="3.4" height="3.5"/><rect x="4.8" y="14.0" width="3.4" height="3.5"/><rect x="9.6" y="14.0" width="3.4" height="3.5"/><rect x="14.399999999999999" y="14.0" width="3.4" height="3.5"/></g></svg>
<div class="t" style="left:668px;top:463.18px;font-size:9px;color:#333333;font-weight:normal;">Table</div>
<div class="t" style="left:668px;top:472.23px;font-size:8px;color:#4a78a8;font-weight:normal;">manufacturers</div>
<div style="position:absolute;left:634px;top:510px;width:122px;height:34px;background:#ffffff;border:1px solid #c79be6;border-radius:6px;box-sizing:border-box;"></div>
<div style="position:absolute;left:630px;top:522px;width:10px;height:10px;background:#ffffff;border:1px solid #c79be6;box-sizing:border-box;"></div>
<div style="position:absolute;left:750px;top:522px;width:10px;height:10px;background:#ffffff;border:1px solid #c79be6;box-sizing:border-box;"></div>
<div style="position:absolute;left:619px;top:526px;width:7px;height:6px;border-left:1px solid #9c9c9c;border-top:1px solid #c0c0c0;border-top-left-radius:4px;"></div>
<svg style="position:absolute;left:625px;top:523.0px;" width="6" height="7" viewBox="0 0 6 7"><path d="M0,0 L6,3.5 L0,7 Z" fill="#7a7a7a"/></svg>
<svg style="position:absolute;left:644px;top:518px;" width="18" height="19" viewBox="0 0 18 19"><g fill="#808080"><rect x="0" y="0" width="3.4" height="2.8"/><rect x="4.8" y="0" width="3.4" height="2.8"/><rect x="9.6" y="0" width="3.4" height="2.8"/><rect x="14.4" y="0" width="3.4" height="2.8"/></g><g fill="#c08de3"><rect x="0.0" y="4.2" width="3.4" height="3.5"/><rect x="4.8" y="4.2" width="3.4" height="3.5"/><rect x="9.6" y="4.2" width="3.4" height="3.5"/><rect x="14.399999999999999" y="4.2" width="3.4" height="3.5"/><rect x="0.0" y="9.100000000000001" width="3.4" height="3.5"/><rect x="4.8" y="9.100000000000001" width="3.4" height="3.5"/><rect x="9.6" y="9.100000000000001" width="3.4" height="3.5"/><rect x="14.399999999999999" y="9.100000000000001" width="3.4" height="3.5"/><rect x="0.0" y="14.0" width="3.4" height="3.5"/><rect x="4.8" y="14.0" width="3.4" height="3.5"/><rect x="9.6" y="14.0" width="3.4" height="3.5"/><rect x="14.399999999999999" y="14.0" width="3.4" height="3.5"/></g></svg>
<div class="t" style="left:668px;top:519.18px;font-size:9px;color:#333333;font-weight:normal;">Table</div>
<div class="t" style="left:668px;top:528.23px;font-size:8px;color:#4a78a8;font-weight:normal;">products</div>
<div style="position:absolute;left:634px;top:574px;width:122px;height:34px;background:#ffffff;border:1px solid #c79be6;border-radius:6px;box-sizing:border-box;"></div>
<div style="position:absolute;left:630px;top:586px;width:10px;height:10px;background:#ffffff;border:1px solid #c79be6;box-sizing:border-box;"></div>
<div style="position:absolute;left:750px;top:586px;width:10px;height:10px;background:#ffffff;border:1px solid #c79be6;box-sizing:border-box;"></div>
<div style="position:absolute;left:619px;top:590px;width:7px;height:6px;border-left:1px solid #9c9c9c;border-top:1px solid #c0c0c0;border-top-left-radius:4px;"></div>
<svg style="position:absolute;left:625px;top:587.0px;" width="6" height="7" viewBox="0 0 6 7"><path d="M0,0 L6,3.5 L0,7 Z" fill="#7a7a7a"/></svg>
<svg style="position:absolute;left:644px;top:582px;" width="18" height="19" viewBox="0 0 18 19"><g fill="#808080"><rect x="0" y="0" width="3.4" height="2.8"/><rect x="4.8" y="0" width="3.4" height="2.8"/><rect x="9.6" y="0" width="3.4" height="2.8"/><rect x="14.4" y="0" width="3.4" height="2.8"/></g><g fill="#c08de3"><rect x="0.0" y="4.2" width="3.4" height="3.5"/><rect x="4.8" y="4.2" width="3.4" height="3.5"/><rect x="9.6" y="4.2" width="3.4" height="3.5"/><rect x="14.399999999999999" y="4.2" width="3.4" height="3.5"/><rect x="0.0" y="9.100000000000001" width="3.4" height="3.5"/><rect x="4.8" y="9.100000000000001" width="3.4" height="3.5"/><rect x="9.6" y="9.100000000000001" width="3.4" height="3.5"/><rect x="14.399999999999999" y="9.100000000000001" width="3.4" height="3.5"/><rect x="0.0" y="14.0" width="3.4" height="3.5"/><rect x="4.8" y="14.0" width="3.4" height="3.5"/><rect x="9.6" y="14.0" width="3.4" height="3.5"/><rect x="14.399999999999999" y="14.0" width="3.4" height="3.5"/></g></svg>
<div class="t" style="left:668px;top:583.18px;font-size:9px;color:#333333;font-weight:normal;">Table</div>
<div class="t" style="left:668px;top:592.23px;font-size:8px;color:#4a78a8;font-weight:normal;">manufacturer detai..</div>
<div style="position:absolute;left:434px;top:358px;width:122px;height:34px;background:#ffffff;border:1px solid #9a9a9a;border-radius:6px;box-sizing:border-box;"></div>
<div style="position:absolute;left:550px;top:370px;width:10px;height:10px;background:#ffffff;border:1px solid #8a8a8a;box-sizing:border-box;"></div>
<svg style="position:absolute;left:444px;top:366px;" width="18" height="18" viewBox="0 0 18 18"><path d="M8,0.5 L1,9 L8,16.5 Z" fill="#8c8c8c"/><path d="M8.5,0.5 L16,9 L8.5,16.5 Z" fill="#40b4d9"/></svg>
<div class="t" style="left:468px;top:367.16px;font-size:9.5px;color:#333333;font-weight:normal;">In Memory</div>
<div class="t" style="left:468px;top:376.73px;font-size:8px;color:#4a78a8;font-weight:normal;">inmemory</div>
<div style="position:absolute;left:760px;top:406px;width:70px;height:1px;background:#c2c2c2;"></div>
<svg style="position:absolute;left:825px;top:403.0px;" width="6" height="7" viewBox="0 0 6 7"><path d="M0,0 L6,3.5 L0,7 Z" fill="#7a7a7a"/></svg>
<div style="position:absolute;left:760px;top:590px;width:70px;height:1px;background:#c2c2c2;"></div>
<svg style="position:absolute;left:825px;top:587.0px;" width="6" height="7" viewBox="0 0 6 7"><path d="M0,0 L6,3.5 L0,7 Z" fill="#7a7a7a"/></svg>
<div style="position:absolute;left:960px;top:590px;width:70px;height:1px;background:#c2c2c2;"></div>
<svg style="position:absolute;left:1025px;top:587.0px;" width="6" height="7" viewBox="0 0 6 7"><path d="M0,0 L6,3.5 L0,7 Z" fill="#7a7a7a"/></svg>
<div style="position:absolute;left:834px;top:390px;width:122px;height:35px;background:#e6faef;border:2.5px solid #5cb88f;border-radius:6px;box-sizing:border-box;"></div>
<div style="position:absolute;left:830px;top:402px;width:10px;height:10px;background:#ffffff;border:1px solid #7fcfa6;box-sizing:border-box;"></div>
<div style="position:absolute;left:950px;top:402px;width:10px;height:10px;background:#ffffff;border:1px solid #7fcfa6;box-sizing:border-box;"></div>
<svg style="position:absolute;left:843px;top:395px;" width="24" height="24" viewBox="0 0 24 24"><path d="M8.7,5.1 L10.2,20.8 L19.8,14.5 Z" fill="#e4e4e4" stroke="#b0b0b0" stroke-width="0.6"/><path d="M8.7,5.1 L1.2,15.2 L10.2,20.8" fill="#ffffff" stroke="#b5b5b5" stroke-width="0.7"/><path d="M7.05,7.32 L9.03,8.55" stroke="#a8a8a8" stroke-width="0.8"/><path d="M5.55,9.34 L9.33,11.69" stroke="#a8a8a8" stroke-width="0.8"/><path d="M4.05,11.36 L9.63,14.83" stroke="#a8a8a8" stroke-width="0.8"/><path d="M2.55,13.38 L9.93,17.97" stroke="#a8a8a8" stroke-width="0.8"/><path d="M13.56,18.59 L12.58,8.39" stroke="#9a9a9a" stroke-width="0.8"/><path d="M16.44,16.70 L15.91,11.21" stroke="#9a9a9a" stroke-width="0.8"/><g fill="#ffffff" stroke="#23b36b" stroke-width="1.1"><circle cx="14.5" cy="7.7" r="5.6"/></g><g fill="none" stroke="#23b36b" stroke-width="1"><ellipse cx="14.5" cy="7.7" rx="2.3" ry="5.6"/><path d="M9,7.7 H20 M10,5 H19 M10,10.4 H19"/></g></svg>
<div class="t" style="left:868px;top:398.86px;font-size:9.5px;color:#333333;font-weight:normal;">LLM Translate</div>
<div class="t" style="left:868px;top:408.43px;font-size:8px;color:#4466a8;font-weight:normal;">promotions</div>
<div style="position:absolute;left:834px;top:574px;width:122px;height:34px;background:#ffffff;border:1px solid #7fd0a8;border-radius:6px;box-sizing:border-box;"></div>
<div style="position:absolute;left:830px;top:586px;width:10px;height:10px;background:#ffffff;border:1px solid #7fcfa6;box-sizing:border-box;"></div>
<div style="position:absolute;left:950px;top:586px;width:10px;height:10px;background:#ffffff;border:1px solid #7fcfa6;box-sizing:border-box;"></div>
<svg style="position:absolute;left:843px;top:579px;" width="24" height="24" viewBox="0 0 24 24"><path d="M8.7,5.1 L10.2,20.8 L19.8,14.5 Z" fill="#e4e4e4" stroke="#b0b0b0" stroke-width="0.6"/><path d="M8.7,5.1 L1.2,15.2 L10.2,20.8" fill="#ffffff" stroke="#b5b5b5" stroke-width="0.7"/><path d="M7.05,7.32 L9.03,8.55" stroke="#a8a8a8" stroke-width="0.8"/><path d="M5.55,9.34 L9.33,11.69" stroke="#a8a8a8" stroke-width="0.8"/><path d="M4.05,11.36 L9.63,14.83" stroke="#a8a8a8" stroke-width="0.8"/><path d="M2.55,13.38 L9.93,17.97" stroke="#a8a8a8" stroke-width="0.8"/><path d="M13.56,18.59 L12.58,8.39" stroke="#9a9a9a" stroke-width="0.8"/><path d="M16.44,16.70 L15.91,11.21" stroke="#9a9a9a" stroke-width="0.8"/><path d="M9.3,2.3 H19.8 V9.6 H13.8 L10.8,11.8 L11.3,9.6 H9.3 Z" fill="#ffffff" stroke="#2ec66e" stroke-width="1.1" stroke-linejoin="round"/></svg>
<div class="t" style="left:868px;top:582.86px;font-size:9.5px;color:#333333;font-weight:normal;">LLM General</div>
<div class="t" style="left:868px;top:592.43px;font-size:8px;color:#4466a8;font-weight:normal;">manufacturer detai..</div>
<div style="position:absolute;left:1034px;top:574px;width:122px;height:34px;background:#ffffff;border:1px solid #7fd0a8;border-radius:6px;box-sizing:border-box;"></div>
<div style="position:absolute;left:1030px;top:586px;width:10px;height:10px;background:#ffffff;border:1px solid #7fcfa6;box-sizing:border-box;"></div>
<div style="position:absolute;left:1150px;top:586px;width:10px;height:10px;background:#ffffff;border:1px solid #7fcfa6;box-sizing:border-box;"></div>
<svg style="position:absolute;left:1043px;top:579px;" width="24" height="24" viewBox="0 0 24 24"><path d="M8.7,5.1 L10.2,20.8 L19.8,14.5 Z" fill="#e4e4e4" stroke="#b0b0b0" stroke-width="0.6"/><path d="M8.7,5.1 L1.2,15.2 L10.2,20.8" fill="#ffffff" stroke="#b5b5b5" stroke-width="0.7"/><path d="M7.05,7.32 L9.03,8.55" stroke="#a8a8a8" stroke-width="0.8"/><path d="M5.55,9.34 L9.33,11.69" stroke="#a8a8a8" stroke-width="0.8"/><path d="M4.05,11.36 L9.63,14.83" stroke="#a8a8a8" stroke-width="0.8"/><path d="M2.55,13.38 L9.93,17.97" stroke="#a8a8a8" stroke-width="0.8"/><path d="M13.56,18.59 L12.58,8.39" stroke="#9a9a9a" stroke-width="0.8"/><path d="M16.44,16.70 L15.91,11.21" stroke="#9a9a9a" stroke-width="0.8"/><path d="M11.8,5.5 H14 L15.2,2 Q17,2 16.6,4.5 L16.4,5.5 H19.8 V11 H11.8 Z M14,5.5 V11" fill="#ffffff" stroke="#2ec66e" stroke-width="1" stroke-linejoin="round"/><path d="M1.5,12.2 H9.5 V17.5 H7 L6.5,20.2 Q4.8,20.5 5,18.5 L5.2,17.5 H1.5 Z M7,12.2 V17.5" fill="#ffffff" stroke="#2ec66e" stroke-width="1" stroke-linejoin="round"/></svg>
<div class="t" style="left:1068px;top:582.86px;font-size:9.5px;color:#333333;font-weight:normal;">LLM Sentiment</div>
<div class="t" style="left:1068px;top:592.43px;font-size:8px;color:#4466a8;font-weight:normal;">manufacturer detai..</div>
<div style="position:absolute;left:399px;top:604px;width:784px;height:30px;background:#484848;"></div>
<div style="position:absolute;left:399px;top:634px;width:784px;height:2px;background:#2b2b2b;"></div>
<div style="position:absolute;left:399px;top:636px;width:784px;height:25px;background:#555555;"></div>
<div style="position:absolute;left:399px;top:661px;width:776px;height:26px;background:#4c4c4c;"></div>
<div style="position:absolute;left:399px;top:687px;width:776px;height:26px;background:#535353;"></div>
<div style="position:absolute;left:399px;top:713px;width:776px;height:26px;background:#4c4c4c;"></div>
<div style="position:absolute;left:399px;top:739px;width:776px;height:26px;background:#535353;"></div>
<div style="position:absolute;left:399px;top:765px;width:776px;height:26px;background:#4c4c4c;"></div>
<div style="position:absolute;left:399px;top:791px;width:776px;height:4px;background:#535353;"></div>
<div style="position:absolute;left:1175px;top:661px;width:8px;height:134px;background:#4a4a4a;"></div>
<div style="position:absolute;left:399px;top:795px;width:784px;height:3px;background:#262626;"></div>
<div style="position:absolute;left:399px;top:798px;width:784px;height:30px;background:#262626;"></div>
<div class="t" style="left:407px;top:614.23px;font-size:11.3px;color:#dddddd;font-weight:bold;">Preview</div>
<svg style="position:absolute;left:1116px;top:613px;" width="16" height="13" viewBox="0 0 16 13"><path d="M1,5.5 Q8,-3.5 15,5.5 Q8,14.5 1,5.5 Z" fill="none" stroke="#cfcfcf" stroke-width="1.1"/><circle cx="8" cy="5.5" r="2.6" fill="none" stroke="#cfcfcf" stroke-width="1.1"/></svg>
<svg style="position:absolute;left:1140px;top:613px;" width="12" height="12" viewBox="0 0 12 12"><path d="M7,0.5 L11.5,5 L10,5.8 L8,8.5 L8.5,10 L7,11 L1.5,5.5 L2.5,4 L4,4.5 L6.5,2.5 L7,0.5 Z" fill="#cfcfcf"/><path d="M4,8 L0.5,11.5" stroke="#cfcfcf" stroke-width="1.2"/></svg>
<svg style="position:absolute;left:1162px;top:617px;" width="12" height="8" viewBox="0 0 12 8"><path d="M1,1 L6,6 L11,1" fill="none" stroke="#cfcfcf" stroke-width="1.1"/></svg>
<div style="position:absolute;left:508px;top:636px;width:1px;height:25px;background:#2a2a2a;"></div>
<div style="position:absolute;left:669px;top:636px;width:1px;height:25px;background:#2a2a2a;"></div>
<div style="position:absolute;left:833px;top:636px;width:1px;height:25px;background:#2a2a2a;"></div>
<div style="position:absolute;left:981px;top:636px;width:1px;height:25px;background:#2a2a2a;"></div>
<div style="position:absolute;left:1137px;top:636px;width:1px;height:25px;background:#2a2a2a;"></div>
<div style="position:absolute;left:508px;top:661px;width:1px;height:134px;background:#474747;"></div>
<div style="position:absolute;left:669px;top:661px;width:1px;height:134px;background:#474747;"></div>
<div style="position:absolute;left:833px;top:661px;width:1px;height:134px;background:#474747;"></div>
<div style="position:absolute;left:981px;top:661px;width:1px;height:134px;background:#474747;"></div>
<div style="position:absolute;left:1137px;top:661px;width:1px;height:134px;background:#474747;"></div>
<svg style="position:absolute;left:408px;top:642px;" width="14" height="12" viewBox="0 0 14 12"><g fill="#4f95f2"><rect x="0" y="0" width="13" height="2"/><rect x="0" y="4" width="10" height="2"/><rect x="0" y="8" width="4" height="2"/></g></svg>
<div class="t" style="left:422px;top:642.74px;font-size:12px;color:#f2f2f2;font-weight:normal;">PromotionK</div>
<div class="t" style="left:406.5px;top:668.64px;font-size:12px;color:#d2d2d2;font-weight:normal;">1</div>
<div class="t" style="left:406.5px;top:694.64px;font-size:12px;color:#d2d2d2;font-weight:normal;">2</div>
<div class="t" style="left:406.5px;top:720.64px;font-size:12px;color:#d2d2d2;font-weight:normal;">3</div>
<div class="t" style="left:406.5px;top:746.64px;font-size:12px;color:#d2d2d2;font-weight:normal;">4</div>
<div class="t" style="left:406.5px;top:772.64px;font-size:12px;color:#d2d2d2;font-weight:normal;">5</div>
<svg style="position:absolute;left:518px;top:642px;" width="14" height="12" viewBox="0 0 14 12"><g fill="#4f95f2"><rect x="0" y="0" width="13" height="2"/><rect x="0" y="4" width="10" height="2"/><rect x="0" y="8" width="4" height="2"/></g></svg>
<div class="t" style="left:532.5px;top:642.74px;font-size:12px;color:#f2f2f2;font-weight:normal;">Promotion</div>
<div class="t" style="left:516.3px;top:668.64px;font-size:12px;color:#d2d2d2;font-weight:normal;">No Discount</div>
<div class="t" style="left:516.3px;top:694.64px;font-size:12px;color:#d2d2d2;font-weight:normal;">Volume Discount 11 to 14</div>
<div class="t" style="left:516.3px;top:720.64px;font-size:12px;color:#d2d2d2;font-weight:normal;">Volume Discount 15 to 24</div>
<div class="t" style="left:516.3px;top:746.64px;font-size:12px;color:#d2d2d2;font-weight:normal;">Volume Discount 25 to 40</div>
<div class="t" style="left:516.3px;top:772.64px;font-size:12px;color:#d2d2d2;font-weight:normal;">Volume Discount 41 to 60</div>
<svg style="position:absolute;left:679px;top:642px;" width="14" height="12" viewBox="0 0 14 12"><g fill="#4f95f2"><rect x="0" y="0" width="13" height="2"/><rect x="0" y="4" width="10" height="2"/><rect x="0" y="8" width="4" height="2"/></g></svg>
<div class="t" style="left:693px;top:642.74px;font-size:12px;color:#f2f2f2;font-weight:normal;">Promotion Category</div>
<div class="t" style="left:677.5px;top:668.64px;font-size:12px;color:#d2d2d2;font-weight:normal;">No Discount</div>
<div class="t" style="left:677.5px;top:694.64px;font-size:12px;color:#d2d2d2;font-weight:normal;">Reseller</div>
<div class="t" style="left:677.5px;top:720.64px;font-size:12px;color:#d2d2d2;font-weight:normal;">Reseller</div>
<div class="t" style="left:677.5px;top:746.64px;font-size:12px;color:#d2d2d2;font-weight:normal;">Reseller</div>
<div class="t" style="left:677.5px;top:772.64px;font-size:12px;color:#d2d2d2;font-weight:normal;">Reseller</div>
<svg style="position:absolute;left:843px;top:642px;" width="14" height="12" viewBox="0 0 14 12"><g fill="#4f95f2"><rect x="0" y="0" width="13" height="2"/><rect x="0" y="4" width="10" height="2"/><rect x="0" y="8" width="4" height="2"/></g></svg>
<div class="t" style="left:857px;top:642.74px;font-size:12px;color:#f2f2f2;font-weight:normal;">Promotion Type</div>
<div class="t" style="left:841px;top:668.64px;font-size:12px;color:#d2d2d2;font-weight:normal;">No Discount</div>
<div class="t" style="left:841px;top:694.64px;font-size:12px;color:#d2d2d2;font-weight:normal;">Volume Discount</div>
<div class="t" style="left:841px;top:720.64px;font-size:12px;color:#d2d2d2;font-weight:normal;">Volume Discount</div>
<div class="t" style="left:841px;top:746.64px;font-size:12px;color:#d2d2d2;font-weight:normal;">Volume Discount</div>
<div class="t" style="left:841px;top:772.64px;font-size:12px;color:#d2d2d2;font-weight:normal;">Volume Discount</div>
<svg style="position:absolute;left:991px;top:642px;" width="14" height="12" viewBox="0 0 14 12"><g fill="#4f95f2"><rect x="0" y="0" width="13" height="2"/><rect x="0" y="4" width="10" height="2"/><rect x="0" y="8" width="4" height="2"/></g></svg>
<div class="t" style="left:1005.3px;top:642.74px;font-size:12px;color:#f2f2f2;font-weight:normal;">Promotion_GR</div>
<div class="t" style="left:988.7px;top:668.64px;font-size:12px;color:#d2d2d2;font-weight:normal;">Χωρίς έκπτωση</div>
<div class="t" style="left:988.7px;top:694.64px;font-size:12px;color:#d2d2d2;font-weight:normal;">Έκπτωση όγκου 11 έως 14</div>
<div class="t" style="left:988.7px;top:720.64px;font-size:12px;color:#d2d2d2;font-weight:normal;">Έκπτωση όγκου 15 έως 24</div>
<div class="t" style="left:988.7px;top:746.64px;font-size:12px;color:#d2d2d2;font-weight:normal;">Έκπτωση όγκου 25 έως 40</div>
<div class="t" style="left:988.7px;top:772.64px;font-size:12px;color:#d2d2d2;font-weight:normal;">Έκπτωση όγκου 41 έως 60</div>
<svg style="position:absolute;left:1175px;top:664px;" width="8" height="6" viewBox="0 0 8 6"><path d="M1,5 L4,1.5 L7,5 Z" fill="#6a6a6a"/></svg>
<div style="position:absolute;left:1176px;top:672px;width:6px;height:36px;background:#6a6a6a;"></div>
<svg style="position:absolute;left:1175px;top:786px;" width="8" height="6" viewBox="0 0 8 6"><path d="M1,1 L4,4.5 L7,1 Z" fill="#6a6a6a"/></svg>
<div style="position:absolute;left:399px;top:798px;width:86px;height:30px;background:#505050;"></div>
<svg style="position:absolute;left:410px;top:811px;" width="12" height="8" viewBox="0 0 12 8"><path d="M1,1.5 L5.8,6.5 L10.6,1.5" fill="none" stroke="#d8d8d8" stroke-width="1.1"/></svg>
<div class="t" style="left:428.4px;top:811.27px;font-size:11.5px;color:#dddddd;font-weight:bold;">Preview</div>
<div style="position:absolute;left:488px;top:798px;width:91px;height:30px;background:#505050;"></div>
<svg style="position:absolute;left:498px;top:811px;" width="12" height="8" viewBox="0 0 12 8"><path d="M1,6.5 L5.8,1.5 L10.6,6.5" fill="none" stroke="#d8d8d8" stroke-width="1.1"/></svg>
<div class="t" style="left:517.5px;top:811.27px;font-size:11.5px;color:#dddddd;font-weight:bold;">Progress</div>
<div style="position:absolute;left:582px;top:798px;width:76px;height:30px;background:#505050;"></div>
<svg style="position:absolute;left:592.5px;top:811px;" width="12" height="8" viewBox="0 0 12 8"><path d="M1,6.5 L5.8,1.5 L10.6,6.5" fill="none" stroke="#d8d8d8" stroke-width="1.1"/></svg>
<div class="t" style="left:611.5px;top:811.27px;font-size:11.5px;color:#dddddd;font-weight:bold;">Errors</div>
<div style="position:absolute;left:661px;top:798px;width:522px;height:30px;background:#505050;"></div>
<svg style="position:absolute;left:671px;top:811px;" width="12" height="8" viewBox="0 0 12 8"><path d="M1,6.5 L5.8,1.5 L10.6,6.5" fill="none" stroke="#d8d8d8" stroke-width="1.1"/></svg>
<div class="t" style="left:689.7px;top:811.27px;font-size:11.5px;color:#dddddd;font-weight:bold;">Master Flow</div>
<div style="position:absolute;left:501px;top:627px;width:174px;height:178px;background:transparent;border:3px solid #5aaee8;box-sizing:border-box;box-shadow:1px 2px 3px rgba(0,0,0,0.35);"></div>
<div style="position:absolute;left:972px;top:627px;width:175px;height:178px;background:transparent;border:3px solid #d380b3;box-sizing:border-box;box-shadow:1px 2px 3px rgba(0,0,0,0.35);"></div>
<div class="t" style="left:1194.8px;top:104.43px;font-size:11.3px;color:#dddddd;font-weight:bold;">Properties</div>
<svg style="position:absolute;left:1446px;top:103px;" width="15" height="12" viewBox="0 0 15 12"><path d="M0.6,6 Q7,-3.6 13.4,6 Q7,15.6 0.6,6 Z" fill="none" stroke="#d0d0d0" stroke-width="1.1"/><circle cx="7" cy="6" r="2.6" fill="none" stroke="#d0d0d0" stroke-width="1.1"/></svg>
<svg style="position:absolute;left:1471px;top:103px;" width="10" height="12" viewBox="0 0 10 12"><path d="M2.5,1 L7.5,6 L2.5,11" fill="none" stroke="#d0d0d0" stroke-width="1.1"/></svg>
<svg style="position:absolute;left:203px;top:93px;" width="40" height="3" viewBox="0 0 40 3"><path d="M0,2 L1,0.5 L3,2 L5,0.5 L7,2 L9,0.5 L11,2 L13,0.5 L15,2 L17,0.5 L19,2 L21,0.5 L23,2 L25,0.5 L27,2 L29,0.5 L31,2 L33,0.5 L35,2 L37,0.5 L39,2" fill="none" stroke="#e0e0e0" stroke-width="0.8"/></svg>
<svg style="position:absolute;left:1318px;top:93px;" width="40" height="3" viewBox="0 0 40 3"><path d="M0,2 L1,0.5 L3,2 L5,0.5 L7,2 L9,0.5 L11,2 L13,0.5 L15,2 L17,0.5 L19,2 L21,0.5 L23,2 L25,0.5 L27,2 L29,0.5 L31,2 L33,0.5 L35,2 L37,0.5 L39,2" fill="none" stroke="#e0e0e0" stroke-width="0.8"/></svg>
<div style="position:absolute;left:1198px;top:136px;width:281px;height:96px;background:#525252;border:1px solid #222222;border-radius:7px;box-sizing:border-box;"></div>
<svg style="position:absolute;left:1207px;top:147px;" width="12" height="8" viewBox="0 0 12 8"><path d="M1,1.5 L5.8,6.3 L10.6,1.5" fill="none" stroke="#cfcfcf" stroke-width="1.1"/></svg>
<div class="t" style="left:1227.7px;top:145.63px;font-size:11.3px;color:#d8d8d8;font-weight:bold;">Result Properties</div>
<div class="t" style="left:1209.7px;top:166.18px;font-size:11.6px;color:#a8a8a8;font-weight:normal;">Resulting Table Name</div>
<div style="position:absolute;left:1212px;top:192px;width:251px;height:24px;background:#f7f7f7;border-radius:5px;"></div>
<div class="t" style="left:1219.6px;top:198.84px;font-size:12px;color:#1e1e1e;font-weight:normal;">promotions</div>
<div style="position:absolute;left:1198px;top:236px;width:281px;height:275px;background:#525252;border:1px solid #222222;border-radius:7px;box-sizing:border-box;"></div>
<svg style="position:absolute;left:1207px;top:246px;" width="12" height="8" viewBox="0 0 12 8"><path d="M1,1.5 L5.8,6.3 L10.6,1.5" fill="none" stroke="#cfcfcf" stroke-width="1.1"/></svg>
<svg style="position:absolute;left:1226px;top:240px;" width="18" height="18" viewBox="0 0 18 18"><g stroke="#b0b0b0" stroke-width="0.7" fill="none"><path d="M8,5 V17.5 L14.5,13 M8,5 L1,13 L8,17.5 M6.3,7 L2.5,11.5 M6.5,9.5 L3.8,12.5 M6.7,12 L5,14 M10,9 V15.5 M12.3,11 V14.3"/></g><g fill="#525252" stroke="#3fd7a5" stroke-width="1"><circle cx="11.5" cy="5" r="4.3"/></g><g fill="none" stroke="#3fd7a5" stroke-width="0.9"><ellipse cx="11.5" cy="5" rx="1.7" ry="4.3"/><path d="M7.2,5 H15.8"/></g></svg>
<div class="t" style="left:1251px;top:245.03px;font-size:11.3px;color:#d8d8d8;font-weight:bold;">LLM Translate</div>
<div class="t" style="left:1209.7px;top:264.88px;font-size:11.6px;color:#a8a8a8;font-weight:normal;">Select Column</div>
<div style="position:absolute;left:1209px;top:288px;width:258px;height:25px;background:#ffffff;border-radius:5px;"></div>
<div class="t" style="left:1218.5px;top:295.14px;font-size:12px;color:#1e1e1e;font-weight:normal;">Promotion</div>
<svg style="position:absolute;left:1446px;top:297px;" width="12" height="7" viewBox="0 0 12 7"><path d="M0.5,0.5 L11,0.5 L5.75,5.8 Z" fill="#9a9a9a"/></svg>
<div class="t" style="left:1209.7px;top:327.38px;font-size:11.6px;color:#a8a8a8;font-weight:normal;">New Column Name</div>
<div style="position:absolute;left:1209px;top:350px;width:258px;height:24px;background:#f7f7f7;border-radius:5px;"></div>
<div class="t" style="left:1216.8px;top:357.44px;font-size:12px;color:#1e1e1e;font-weight:normal;">Promotion_GR</div>
<div class="t" style="left:1209.7px;top:389.18px;font-size:11.6px;color:#a8a8a8;font-weight:normal;">From (Optional)</div>
<div style="position:absolute;left:1209px;top:412px;width:258px;height:24px;background:#ffffff;border-radius:5px;"></div>
<div class="t" style="left:1220.4px;top:419.14px;font-size:12px;color:#1e1e1e;font-weight:normal;">English (United States)</div>
<svg style="position:absolute;left:1445px;top:421px;" width="12" height="7" viewBox="0 0 12 7"><path d="M0.5,0.5 L11,0.5 L5.75,5.8 Z" fill="#9a9a9a"/></svg>
<div class="t" style="left:1209.7px;top:450.78px;font-size:11.6px;color:#a8a8a8;font-weight:normal;">To</div>
<div style="position:absolute;left:1209px;top:474px;width:258px;height:24px;background:#ffffff;border-radius:5px;"></div>
<div class="t" style="left:1220.4px;top:481.04px;font-size:12px;color:#1e1e1e;font-weight:normal;">Ελληνικά (Ελλάδα)</div>
<svg style="position:absolute;left:1445px;top:483px;" width="12" height="7" viewBox="0 0 12 7"><path d="M0.5,0.5 L11,0.5 L5.75,5.8 Z" fill="#9a9a9a"/></svg>
<div style="position:absolute;left:1198px;top:515px;width:281px;height:96px;background:#525252;border:1px solid #222222;border-radius:7px;box-sizing:border-box;"></div>
<svg style="position:absolute;left:1207px;top:525px;" width="12" height="8" viewBox="0 0 12 8"><path d="M1,1.5 L5.8,6.3 L10.6,1.5" fill="none" stroke="#cfcfcf" stroke-width="1.1"/></svg>
<div class="t" style="left:1227.3px;top:523.53px;font-size:11.3px;color:#d8d8d8;font-weight:bold;">LLM Provider</div>
<div style="position:absolute;left:1209px;top:544px;width:15px;height:15px;background:#eeeeee;border-radius:3px;border:1.5px solid #111;box-sizing:border-box;"></div>
<div class="t" style="left:1233.5px;top:546.38px;font-size:11.6px;color:#e0e0e0;font-weight:normal;">Alternative LLM Provider</div>
<div style="position:absolute;left:1209px;top:574px;width:258px;height:25px;background:#eeeeee;border-radius:5px;"></div>
<div class="t" style="left:1218.4px;top:581.84px;font-size:12px;color:#8a8a8a;font-weight:normal;">Select...</div>
<svg style="position:absolute;left:1446px;top:583px;" width="12" height="7" viewBox="0 0 12 7"><path d="M0.5,0.5 L11,0.5 L5.75,5.8 Z" fill="#a0a0a0"/></svg>
<svg style="position:absolute;left:1210px;top:548px;" width="22" height="28" viewBox="0 0 22 28"><path d="M7.3,14 V4 Q7.3,2.2 8.9,2.2 Q10.5,2.2 10.5,4 V9 Q10.8,7.5 12,7.5 Q13.5,7.5 13.5,9.5 Q13.8,8.5 15,8.5 Q16.5,8.5 16.5,10.5 Q16.8,9.5 18,9.5 Q19.5,9.5 19.5,11.5 V19 Q19.5,25.5 13.5,25.5 H11.5 Q8.5,25.5 6.5,22 L2.6,16.5 Q2,15 3.5,14.6 Q5,14.4 7.3,17 Z" fill="#ffffff" stroke="#111111" stroke-width="1.2" stroke-linejoin="round"/><path d="M10.5,9 V14 M13.5,9.5 V14 M16.5,10.5 V14" stroke="#111111" stroke-width="0.9"/></svg>
<div style="position:absolute;left:1198px;top:614px;width:281px;height:28px;background:#525252;border:1px solid #222222;border-radius:7px;box-sizing:border-box;"></div>
<svg style="position:absolute;left:1210px;top:622.5px;" width="8" height="12" viewBox="0 0 8 12"><path d="M1.5,1 L6.3,5.8 L1.5,10.6" fill="none" stroke="#cfcfcf" stroke-width="1.1"/></svg>
<svg style="position:absolute;left:1226px;top:619.5px;" width="18" height="18" viewBox="0 0 18 18"><g><rect x="1" y="2" width="2.5" height="13" fill="#8a8a8a"/><rect x="1" y="6" width="2.5" height="9" fill="#3fc5b0"/><rect x="5.5" y="2" width="2.5" height="13" fill="#8a8a8a"/><rect x="10" y="2" width="2.5" height="13" fill="#8a8a8a"/><path d="M10,13 L12,15 L15.5,10.5" fill="none" stroke="#3fd77a" stroke-width="1"/></g></svg>
<div class="t" style="left:1250.9px;top:623.43px;font-size:11.3px;color:#d8d8d8;font-weight:bold;">Column Selection</div>
<div style="position:absolute;left:1198px;top:645px;width:281px;height:28px;background:#525252;border:1px solid #222222;border-radius:7px;box-sizing:border-box;"></div>
<svg style="position:absolute;left:1210px;top:653.5px;" width="8" height="12" viewBox="0 0 8 12"><path d="M1.5,1 L6.3,5.8 L1.5,10.6" fill="none" stroke="#cfcfcf" stroke-width="1.1"/></svg>
<svg style="position:absolute;left:1226px;top:650.5px;" width="18" height="18" viewBox="0 0 18 18"><g stroke="#e0913a" stroke-width="1.1" fill="none"><path d="M5,1 L2.5,14 M9.5,1 L7,14 M1,5 H11.5 M0.5,10 H10"/></g><circle cx="12.5" cy="12" r="3" fill="none" stroke="#aaaaaa" stroke-width="0.9"/></svg>
<div class="t" style="left:1250.9px;top:654.43px;font-size:11.3px;color:#d8d8d8;font-weight:bold;">Set Variable Values</div>
<div style="position:absolute;left:1198px;top:676px;width:281px;height:28px;background:#525252;border:1px solid #222222;border-radius:7px;box-sizing:border-box;"></div>
<svg style="position:absolute;left:1210px;top:684.5px;" width="8" height="12" viewBox="0 0 8 12"><path d="M1.5,1 L6.3,5.8 L1.5,10.6" fill="none" stroke="#cfcfcf" stroke-width="1.1"/></svg>
<svg style="position:absolute;left:1226px;top:681.5px;" width="18" height="18" viewBox="0 0 18 18"><circle cx="8" cy="8.5" r="7" fill="none" stroke="#5ea3d4" stroke-width="1.2"/><rect x="7.2" y="7" width="1.8" height="5.5" fill="#5ea3d4"/><circle cx="8.1" cy="4.8" r="1.1" fill="#5ea3d4"/></svg>
<div class="t" style="left:1250.9px;top:685.43px;font-size:11.3px;color:#d8d8d8;font-weight:bold;">Metadata</div>
<div style="position:absolute;left:0px;top:828px;width:1490px;height:3px;background:#1f2026;"></div>
<svg style="position:absolute;left:12px;top:842px;" width="16" height="14" viewBox="0 0 16 14"><path d="M1,2 H15 M1,7 H15 M1,12 H15" stroke="#e0e0e0" stroke-width="1.8"/></svg>
<svg style="position:absolute;left:45px;top:841px;" width="20" height="18" viewBox="0 0 20 18"><path d="M1,3 H6 L7.5,5 H13 V9 M1,3 V15 H9" fill="none" stroke="#cfcfcf" stroke-width="1.2"/><path d="M1,1 H6" stroke="#cfcfcf" stroke-width="1"/><circle cx="13" cy="12" r="4.2" fill="#262626" stroke="#cfcfcf" stroke-width="1.2"/><path d="M10,15 L7.5,17.5" stroke="#cfcfcf" stroke-width="1.3"/></svg>
<svg style="position:absolute;left:76px;top:841px;" width="19" height="18" viewBox="0 0 19 18"><path d="M1,1.5 H11 L7.5,6 V12 L4.5,13 V6 Z" fill="none" stroke="#cfcfcf" stroke-width="1.1" stroke-linejoin="round"/><path d="M12,2 H17.5 V13 H9 M2,16 H17.5" fill="none" stroke="#cfcfcf" stroke-width="1.1"/><path d="M9,16 V14 M12,16 V14 M15,16 V14" stroke="#cfcfcf" stroke-width="1"/></svg>
<div style="position:absolute;left:100px;top:837px;width:142px;height:27px;background:#464a4f;border-radius:4px 4px 7px 7px;border-bottom:3px solid #2fb52a;box-sizing:border-box;"></div>
<div style="position:absolute;left:245px;top:837px;width:160px;height:27px;background:#464a4f;border-radius:4px 4px 7px 7px;border-bottom:3px solid #fdc52e;box-sizing:border-box;"></div>
<div style="position:absolute;left:408px;top:837px;width:131px;height:27px;background:#464a4f;border-radius:4px 4px 7px 7px;border-bottom:3px solid #2fb52a;box-sizing:border-box;"></div>
<div class="t" style="left:105.5px;top:840.15px;font-size:14px;color:#c8c8c8;font-weight:normal;">*</div>
<svg style="position:absolute;left:115.5px;top:841.5px;" width="12" height="13" viewBox="0 0 12 13"><g fill="#2fc22a"><rect x="0" y="4" width="3" height="9"/><rect x="4.5" y="7" width="3" height="6"/><rect x="9" y="1" width="3" height="12"/></g></svg>
<div class="t" style="left:132.5px;top:842.72px;font-size:11.2px;color:#d2d2d2;font-weight:normal;">1_LayeredMap_2</div>
<div class="t" style="left:413.5px;top:840.15px;font-size:14px;color:#c8c8c8;font-weight:normal;">*</div>
<svg style="position:absolute;left:423.5px;top:841.5px;" width="12" height="13" viewBox="0 0 12 13"><g fill="#2fc22a"><rect x="0" y="4" width="3" height="9"/><rect x="4.5" y="7" width="3" height="6"/><rect x="9" y="1" width="3" height="12"/></g></svg>
<div class="t" style="left:441.2px;top:842.72px;font-size:11.2px;color:#d2d2d2;font-weight:normal;">1_LayeredMap</div>
<svg style="position:absolute;left:262px;top:842px;" width="11" height="11" viewBox="0 0 11 11"><g fill="#f2c12e"><ellipse cx="5" cy="2" rx="4.5" ry="1.9"/><path d="M0.5,3.3 Q5,6 9.5,3.3 V5.6 Q5,8.3 0.5,5.6 Z"/><path d="M0.5,7 Q5,9.7 9.5,7 V9 Q5,11.7 0.5,9 Z"/></g></svg>
<div style="position:absolute;left:278px;top:838px;width:18px;height:18px;background:#545859;"></div>
<div style="position:absolute;left:296px;top:838px;width:17px;height:18px;background:#606465;"></div>
<div style="position:absolute;left:313px;top:838px;width:18px;height:18px;background:#52575a;"></div>
<div style="position:absolute;left:331px;top:838px;width:18px;height:18px;background:#4a4e52;"></div>
<div style="position:absolute;left:349px;top:838px;width:17px;height:18px;background:#5f6364;"></div>
<div style="position:absolute;left:366px;top:838px;width:18px;height:18px;background:#585858;"></div>
<div style="position:absolute;left:542px;top:828px;width:132px;height:36px;background:#262626;border:3px solid #fdc52e;border-top:none;border-radius:0 0 8px 8px;box-sizing:border-box;"></div>
<svg style="position:absolute;left:562px;top:842px;" width="11" height="11" viewBox="0 0 11 11"><g fill="#f2c12e"><ellipse cx="5" cy="2" rx="4.5" ry="1.9"/><path d="M0.5,3.3 Q5,6 9.5,3.3 V5.6 Q5,8.3 0.5,5.6 Z"/><path d="M0.5,7 Q5,9.7 9.5,7 V9 Q5,11.7 0.5,9 Z"/></g></svg>
<div style="position:absolute;left:574px;top:838px;width:18px;height:18px;background:#2a2c2d;"></div>
<div style="position:absolute;left:592px;top:838px;width:17px;height:18px;background:#2f3f45;"></div>
<div style="position:absolute;left:609px;top:838px;width:18px;height:18px;background:#3a3d48;"></div>
<div style="position:absolute;left:627px;top:838px;width:18px;height:18px;background:#474543;"></div>
<div style="position:absolute;left:645px;top:838px;width:7px;height:18px;background:#3a3c3c;"></div>
<svg style="position:absolute;left:655px;top:844px;" width="12" height="8" viewBox="0 0 12 8"><path d="M0.5,0.5 L11,0.5 L5.75,7 Z" fill="#ffffff"/></svg>
<svg style="position:absolute;left:687px;top:843px;" width="14" height="14" viewBox="0 0 14 14"><path d="M7,0.5 V13.5 M0.5,7 H13.5" stroke="#e8e8e8" stroke-width="1.8"/></svg>
<svg style="position:absolute;left:1380px;top:841px;" width="19" height="18" viewBox="0 0 19 18"><g stroke="#8a8a8a" stroke-width="0.9" fill="none"><path d="M9.3,1.3 V17 L17,11.4 Z M12.3,5.5 V14.8"/><path d="M1,11.4 L9.3,1.3 M2.8,12.7 L9.3,4.8 M4.6,14 L9.3,8.3 M6.4,15.3 L9.3,11.8 M1,11.4 L9.3,17"/></g></svg>
<svg style="position:absolute;left:1407px;top:840px;" width="17" height="17" viewBox="0 0 17 17"><circle cx="8.5" cy="8.5" r="7.6" fill="#ee2a1e"/><path d="M8.5,4 V13 M4,8.5 H13" stroke="#ffffff" stroke-width="1.6"/></svg>
<svg style="position:absolute;left:1424px;top:842px;" width="17" height="17" viewBox="0 0 17 17"><path d="M5,1.5 L9.5,6 L12.5,6.5 L10.5,9 Q8,11.5 5,12 L3.5,13 L4,10 Q2,7 1,5 Z" fill="none" stroke="#d8d8d8" stroke-width="1.1" stroke-linejoin="round"/><path d="M7,11 L12.5,16.5" stroke="#d8d8d8" stroke-width="1.1"/></svg>
<svg style="position:absolute;left:1448px;top:847px;" width="8" height="6" viewBox="0 0 8 6"><path d="M0.5,0.5 H7.5 L4,5.5 Z" fill="#dddddd"/></svg>
<svg style="position:absolute;left:1465px;top:843px;" width="17" height="18" viewBox="0 0 17 18"><path d="M8.5,9 Q10.5,8.5 10,6.5 Q9,4.5 6.5,5.5 Q4,6.5 4.5,10 Q5.5,13.5 9.5,13 Q13.5,12 13.5,8 Q13,3 8.5,2 Q3,1.5 1.5,7 Q0.5,13 5,15.5 Q9,17.5 13,15.5" fill="none" stroke="#d8d8d8" stroke-width="1.3"/></svg>
<svg style="position:absolute;left:926px;top:338px;" width="51" height="66" viewBox="0 0 51 66"><g style="filter:drop-shadow(1px 2px 1.5px rgba(0,0,0,0.45))"><path d="M42.0,8.0 L9.7,54.5" stroke="#e2a129" stroke-width="4.3" stroke-linecap="round" fill="none"/><path d="M12.1,37.4 L9.7,54.5 L24.9,46.3" stroke="#e2a129" stroke-width="5.0" stroke-linejoin="miter" stroke-miterlimit="10" fill="none"/></g></svg>
<svg style="position:absolute;left:1399px;top:110px;" width="57" height="55" viewBox="0 0 57 55"><g style="filter:drop-shadow(1px 2px 1.5px rgba(0,0,0,0.45))"><path d="M8.0,46.0 L46.3,10.1" stroke="#139f79" stroke-width="4.3" stroke-linecap="round" fill="none"/><path d="M40.4,26.3 L46.3,10.1 L29.7,14.9" stroke="#139f79" stroke-width="5.0" stroke-linejoin="miter" stroke-miterlimit="10" fill="none"/></g></svg>
<svg style="position:absolute;left:1084px;top:563px;" width="50" height="55" viewBox="0 0 50 55"><g style="filter:drop-shadow(1px 2px 1.5px rgba(0,0,0,0.45))"><path d="M8.0,8.0 L39.5,44.2" stroke="#139f79" stroke-width="4.3" stroke-linecap="round" fill="none"/><path d="M23.5,37.7 L39.5,44.2 L35.3,27.5" stroke="#139f79" stroke-width="5.0" stroke-linejoin="miter" stroke-miterlimit="10" fill="none"/></g></svg>
<svg style="position:absolute;left:0px;top:857px;" width="10" height="10" viewBox="0 0 10 10"><path d="M0,0 A10,10 0 0 0 10,10 H0 Z" fill="#c9c9c9"/></svg>
<svg style="position:absolute;left:1480px;top:857px;" width="10" height="10" viewBox="0 0 10 10"><path d="M10,0 A10,10 0 0 1 0,10 H10 Z" fill="#c9c9c9"/></svg>
</body></html>
